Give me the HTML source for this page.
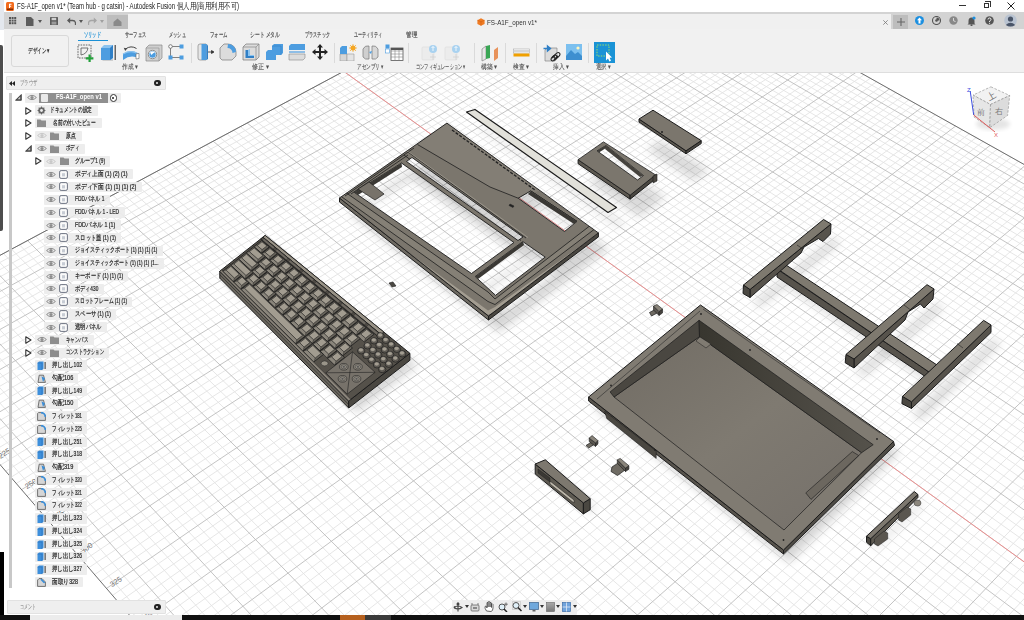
<!DOCTYPE html><html><head><meta charset="utf-8"><style>
*{margin:0;padding:0;box-sizing:border-box}
html,body{width:1024px;height:620px;overflow:hidden;background:#fff;font-family:"Liberation Sans",sans-serif;position:relative}
.a{position:absolute}
.t{position:absolute;white-space:nowrap;line-height:1}
</style></head><body><svg class="a" style="left:0;top:0" width="1024" height="620" viewBox="0 0 1024 620"><rect width="1024" height="620" fill="#fff"/><g stroke="#e3e3e3" stroke-width="0.9"><line x1="611.7" y1="-66.7" x2="-118.9" y2="326.4"/><line x1="616.7" y1="-63.9" x2="-114.5" y2="331.5"/><line x1="621.7" y1="-61.0" x2="-110.1" y2="336.6"/><line x1="626.8" y1="-58.2" x2="-105.6" y2="341.8"/><line x1="636.9" y1="-52.5" x2="-96.6" y2="352.3"/><line x1="642.1" y1="-49.6" x2="-92.1" y2="357.6"/><line x1="647.2" y1="-46.7" x2="-87.5" y2="362.9"/><line x1="652.4" y1="-43.8" x2="-82.9" y2="368.2"/><line x1="662.9" y1="-38.0" x2="-73.6" y2="379.0"/><line x1="668.1" y1="-35.0" x2="-68.9" y2="384.5"/><line x1="673.4" y1="-32.1" x2="-64.2" y2="390.0"/><line x1="678.7" y1="-29.1" x2="-59.4" y2="395.6"/><line x1="689.4" y1="-23.1" x2="-49.8" y2="406.7"/><line x1="694.8" y1="-20.1" x2="-44.9" y2="412.4"/><line x1="700.2" y1="-17.0" x2="-40.0" y2="418.1"/><line x1="705.7" y1="-14.0" x2="-35.1" y2="423.8"/><line x1="716.7" y1="-7.8" x2="-25.1" y2="435.4"/><line x1="722.2" y1="-4.7" x2="-20.1" y2="441.3"/><line x1="727.8" y1="-1.6" x2="-15.0" y2="447.2"/><line x1="733.3" y1="1.5" x2="-9.9" y2="453.1"/><line x1="744.6" y1="7.8" x2="0.4" y2="465.1"/><line x1="750.3" y1="11.0" x2="5.7" y2="471.2"/><line x1="756.0" y1="14.2" x2="10.9" y2="477.3"/><line x1="761.7" y1="17.4" x2="16.2" y2="483.5"/><line x1="773.3" y1="23.9" x2="26.9" y2="495.9"/><line x1="779.1" y1="27.2" x2="32.3" y2="502.2"/><line x1="785.0" y1="30.5" x2="37.8" y2="508.5"/><line x1="790.9" y1="33.8" x2="43.3" y2="514.9"/><line x1="802.7" y1="40.4" x2="54.4" y2="527.8"/><line x1="808.7" y1="43.8" x2="60.0" y2="534.4"/><line x1="814.7" y1="47.1" x2="65.7" y2="540.9"/><line x1="820.8" y1="50.5" x2="71.4" y2="547.6"/><line x1="832.9" y1="57.4" x2="82.9" y2="561.0"/><line x1="839.1" y1="60.8" x2="88.7" y2="567.8"/><line x1="845.3" y1="64.3" x2="94.6" y2="574.6"/><line x1="851.5" y1="67.7" x2="100.5" y2="581.5"/><line x1="864.0" y1="74.8" x2="112.5" y2="595.4"/><line x1="870.3" y1="78.3" x2="118.5" y2="602.4"/><line x1="876.6" y1="81.8" x2="124.6" y2="609.5"/><line x1="883.0" y1="85.4" x2="130.8" y2="616.7"/><line x1="895.9" y1="92.6" x2="143.2" y2="631.2"/><line x1="902.4" y1="96.3" x2="149.5" y2="638.5"/><line x1="908.9" y1="99.9" x2="155.9" y2="645.9"/><line x1="915.4" y1="103.6" x2="162.3" y2="653.3"/><line x1="928.7" y1="111.0" x2="175.2" y2="668.4"/><line x1="935.3" y1="114.7" x2="181.8" y2="676.0"/><line x1="942.0" y1="118.5" x2="188.4" y2="683.7"/><line x1="948.8" y1="122.3" x2="195.1" y2="691.4"/><line x1="962.4" y1="129.9" x2="208.5" y2="707.1"/><line x1="969.2" y1="133.8" x2="215.4" y2="715.0"/><line x1="976.1" y1="137.6" x2="222.3" y2="723.0"/><line x1="983.1" y1="141.5" x2="229.2" y2="731.1"/><line x1="997.1" y1="149.3" x2="243.2" y2="747.5"/><line x1="1004.1" y1="153.3" x2="250.4" y2="755.7"/><line x1="1011.2" y1="157.3" x2="257.5" y2="764.1"/><line x1="1018.4" y1="161.3" x2="264.8" y2="772.5"/><line x1="1032.8" y1="169.4" x2="279.4" y2="789.5"/><line x1="1040.0" y1="173.4" x2="286.9" y2="798.2"/><line x1="1047.3" y1="177.5" x2="294.3" y2="806.9"/><line x1="1054.7" y1="181.6" x2="301.9" y2="815.6"/><line x1="1069.5" y1="190.0" x2="317.2" y2="833.4"/><line x1="1077.0" y1="194.2" x2="324.9" y2="842.5"/><line x1="1084.5" y1="198.4" x2="332.8" y2="851.5"/><line x1="1092.1" y1="202.6" x2="340.7" y2="860.7"/><line x1="1107.4" y1="211.2" x2="356.6" y2="879.3"/><line x1="1115.1" y1="215.5" x2="364.7" y2="888.7"/><line x1="1122.8" y1="219.8" x2="372.9" y2="898.2"/><line x1="1130.7" y1="224.2" x2="381.2" y2="907.8"/><line x1="1146.4" y1="233.0" x2="397.9" y2="927.3"/><line x1="1154.3" y1="237.5" x2="406.4" y2="937.1"/><line x1="1162.3" y1="242.0" x2="414.9" y2="947.1"/><line x1="1170.4" y1="246.5" x2="423.5" y2="957.1"/><line x1="1186.6" y1="255.6" x2="441.1" y2="977.5"/><line x1="1194.8" y1="260.2" x2="449.9" y2="987.8"/><line x1="1203.1" y1="264.8" x2="458.9" y2="998.2"/><line x1="1211.4" y1="269.5" x2="467.9" y2="1008.7"/><line x1="1228.1" y1="278.8" x2="486.3" y2="1030.1"/><line x1="1236.6" y1="283.6" x2="495.6" y2="1040.9"/><line x1="1245.1" y1="288.4" x2="505.0" y2="1051.8"/><line x1="1253.6" y1="293.2" x2="514.5" y2="1062.9"/><line x1="1270.9" y1="302.8" x2="533.7" y2="1085.2"/><line x1="1279.6" y1="307.7" x2="543.5" y2="1096.6"/><line x1="1288.4" y1="312.7" x2="553.4" y2="1108.1"/><line x1="1297.3" y1="317.6" x2="563.3" y2="1119.7"/><line x1="1315.1" y1="327.6" x2="583.6" y2="1143.2"/><line x1="1324.1" y1="332.7" x2="593.8" y2="1155.1"/><line x1="1333.2" y1="337.8" x2="604.2" y2="1167.2"/><line x1="1342.3" y1="342.9" x2="614.7" y2="1179.4"/><line x1="1360.8" y1="353.2" x2="636.0" y2="1204.1"/><line x1="1370.1" y1="358.4" x2="646.8" y2="1216.7"/><line x1="1379.5" y1="363.7" x2="657.7" y2="1229.4"/><line x1="1388.9" y1="369.0" x2="668.7" y2="1242.2"/><line x1="1408.0" y1="379.7" x2="691.2" y2="1268.3"/><line x1="1417.6" y1="385.1" x2="702.5" y2="1281.5"/><line x1="1427.3" y1="390.5" x2="714.0" y2="1294.9"/><line x1="1437.1" y1="396.0" x2="725.7" y2="1308.4"/><line x1="1456.8" y1="407.0" x2="749.3" y2="1335.9"/><line x1="1466.7" y1="412.6" x2="761.3" y2="1349.9"/><line x1="1476.8" y1="418.2" x2="773.5" y2="1364.0"/><line x1="1486.9" y1="423.9" x2="785.8" y2="1378.3"/><line x1="1507.3" y1="435.3" x2="810.7" y2="1407.3"/><line x1="1517.6" y1="441.1" x2="823.4" y2="1422.1"/><line x1="1528.0" y1="446.9" x2="836.3" y2="1437.0"/><line x1="1538.4" y1="452.8" x2="849.3" y2="1452.1"/><line x1="1559.6" y1="464.6" x2="875.7" y2="1482.8"/><line x1="1570.3" y1="470.6" x2="889.1" y2="1498.5"/><line x1="1581.0" y1="476.6" x2="902.7" y2="1514.3"/><line x1="1591.8" y1="482.7" x2="916.5" y2="1530.3"/><line x1="1613.7" y1="495.0" x2="944.5" y2="1562.8"/><line x1="1624.8" y1="501.2" x2="958.7" y2="1579.4"/><line x1="1636.0" y1="507.4" x2="973.1" y2="1596.1"/><line x1="1647.2" y1="513.7" x2="987.7" y2="1613.1"/><line x1="1669.9" y1="526.5" x2="1017.4" y2="1647.7"/><line x1="1681.4" y1="532.9" x2="1032.5" y2="1665.3"/><line x1="1692.9" y1="539.4" x2="1047.9" y2="1683.1"/><line x1="1704.6" y1="545.9" x2="1063.4" y2="1701.1"/><line x1="1728.1" y1="559.1" x2="1095.0" y2="1737.8"/><line x1="1740.1" y1="565.8" x2="1111.1" y2="1756.6"/><line x1="1752.1" y1="572.5" x2="1127.4" y2="1775.5"/><line x1="1764.1" y1="579.3" x2="1143.9" y2="1794.7"/><line x1="1788.6" y1="593.0" x2="1177.6" y2="1833.9"/><line x1="1801.0" y1="599.9" x2="1194.7" y2="1853.8"/><line x1="1813.4" y1="606.9" x2="1212.1" y2="1874.0"/><line x1="1826.0" y1="614.0" x2="1229.7" y2="1894.5"/><line x1="606.7" y1="-69.5" x2="1838.7" y2="621.1"/><line x1="601.8" y1="-66.9" x2="1835.6" y2="627.9"/><line x1="596.9" y1="-64.2" x2="1832.4" y2="634.7"/><line x1="587.1" y1="-59.0" x2="1826.1" y2="648.6"/><line x1="582.1" y1="-56.3" x2="1822.9" y2="655.6"/><line x1="577.1" y1="-53.6" x2="1819.7" y2="662.6"/><line x1="572.1" y1="-51.0" x2="1816.4" y2="669.7"/><line x1="562.0" y1="-45.6" x2="1809.8" y2="684.2"/><line x1="557.0" y1="-42.8" x2="1806.5" y2="691.4"/><line x1="551.8" y1="-40.1" x2="1803.2" y2="698.8"/><line x1="546.7" y1="-37.4" x2="1799.8" y2="706.2"/><line x1="536.4" y1="-31.8" x2="1792.9" y2="721.2"/><line x1="531.2" y1="-29.0" x2="1789.5" y2="728.7"/><line x1="525.9" y1="-26.2" x2="1786.0" y2="736.4"/><line x1="520.7" y1="-23.4" x2="1782.5" y2="744.1"/><line x1="510.1" y1="-17.8" x2="1775.3" y2="759.7"/><line x1="504.8" y1="-14.9" x2="1771.7" y2="767.6"/><line x1="499.4" y1="-12.0" x2="1768.1" y2="775.5"/><line x1="494.0" y1="-9.1" x2="1764.4" y2="783.6"/><line x1="483.1" y1="-3.3" x2="1757.0" y2="799.8"/><line x1="477.7" y1="-0.4" x2="1753.3" y2="808.1"/><line x1="472.2" y1="2.5" x2="1749.5" y2="816.4"/><line x1="466.6" y1="5.5" x2="1745.6" y2="824.7"/><line x1="455.5" y1="11.5" x2="1737.9" y2="841.7"/><line x1="449.9" y1="14.5" x2="1734.0" y2="850.3"/><line x1="444.2" y1="17.5" x2="1730.0" y2="858.9"/><line x1="438.6" y1="20.5" x2="1726.0" y2="867.6"/><line x1="427.2" y1="26.6" x2="1718.0" y2="885.3"/><line x1="421.4" y1="29.7" x2="1713.9" y2="894.3"/><line x1="415.6" y1="32.8" x2="1709.7" y2="903.3"/><line x1="409.8" y1="35.9" x2="1705.6" y2="912.5"/><line x1="398.1" y1="42.2" x2="1697.1" y2="930.9"/><line x1="392.2" y1="45.4" x2="1692.9" y2="940.3"/><line x1="386.2" y1="48.6" x2="1688.5" y2="949.7"/><line x1="380.2" y1="51.8" x2="1684.2" y2="959.3"/><line x1="368.2" y1="58.2" x2="1675.4" y2="978.6"/><line x1="362.1" y1="61.5" x2="1670.9" y2="988.4"/><line x1="356.0" y1="64.7" x2="1666.4" y2="998.3"/><line x1="349.9" y1="68.0" x2="1661.8" y2="1008.3"/><line x1="337.5" y1="74.6" x2="1652.6" y2="1028.5"/><line x1="331.3" y1="78.0" x2="1647.9" y2="1038.8"/><line x1="325.0" y1="81.3" x2="1643.2" y2="1049.1"/><line x1="318.7" y1="84.7" x2="1638.4" y2="1059.6"/><line x1="306.0" y1="91.5" x2="1628.7" y2="1080.8"/><line x1="299.6" y1="94.9" x2="1623.8" y2="1091.5"/><line x1="293.2" y1="98.4" x2="1618.8" y2="1102.4"/><line x1="286.7" y1="101.8" x2="1613.8" y2="1113.4"/><line x1="273.7" y1="108.8" x2="1603.7" y2="1135.6"/><line x1="267.1" y1="112.3" x2="1598.5" y2="1146.9"/><line x1="260.5" y1="115.9" x2="1593.3" y2="1158.3"/><line x1="253.8" y1="119.4" x2="1588.0" y2="1169.8"/><line x1="240.4" y1="126.6" x2="1577.4" y2="1193.2"/><line x1="233.7" y1="130.2" x2="1572.0" y2="1205.0"/><line x1="226.9" y1="133.9" x2="1566.5" y2="1217.0"/><line x1="220.0" y1="137.5" x2="1561.0" y2="1229.1"/><line x1="206.2" y1="144.9" x2="1549.7" y2="1253.7"/><line x1="199.3" y1="148.7" x2="1544.0" y2="1266.2"/><line x1="192.3" y1="152.4" x2="1538.3" y2="1278.8"/><line x1="185.2" y1="156.2" x2="1532.5" y2="1291.5"/><line x1="171.0" y1="163.8" x2="1520.6" y2="1317.4"/><line x1="163.9" y1="167.6" x2="1514.6" y2="1330.5"/><line x1="156.7" y1="171.5" x2="1508.6" y2="1343.8"/><line x1="149.4" y1="175.3" x2="1502.4" y2="1357.3"/><line x1="134.8" y1="183.2" x2="1490.0" y2="1384.5"/><line x1="127.4" y1="187.1" x2="1483.6" y2="1398.4"/><line x1="120.0" y1="191.1" x2="1477.2" y2="1412.4"/><line x1="112.6" y1="195.1" x2="1470.8" y2="1426.6"/><line x1="97.5" y1="203.1" x2="1457.6" y2="1455.4"/><line x1="89.9" y1="207.2" x2="1450.9" y2="1470.1"/><line x1="82.3" y1="211.3" x2="1444.1" y2="1484.9"/><line x1="74.6" y1="215.4" x2="1437.3" y2="1499.9"/><line x1="59.1" y1="223.7" x2="1423.4" y2="1530.4"/><line x1="51.3" y1="227.9" x2="1416.3" y2="1545.9"/><line x1="43.4" y1="232.1" x2="1409.1" y2="1561.6"/><line x1="35.5" y1="236.3" x2="1401.9" y2="1577.4"/><line x1="19.5" y1="244.9" x2="1387.1" y2="1609.7"/><line x1="11.5" y1="249.2" x2="1379.6" y2="1626.1"/><line x1="3.3" y1="253.5" x2="1372.0" y2="1642.8"/><line x1="-4.8" y1="257.9" x2="1364.4" y2="1659.6"/><line x1="-21.3" y1="266.7" x2="1348.7" y2="1693.9"/><line x1="-29.6" y1="271.2" x2="1340.7" y2="1711.3"/><line x1="-38.0" y1="275.6" x2="1332.7" y2="1729.0"/><line x1="-46.4" y1="280.2" x2="1324.5" y2="1746.9"/><line x1="-63.4" y1="289.3" x2="1307.9" y2="1783.3"/><line x1="-72.0" y1="293.8" x2="1299.4" y2="1801.9"/><line x1="-80.6" y1="298.5" x2="1290.8" y2="1820.7"/><line x1="-89.3" y1="303.1" x2="1282.1" y2="1839.7"/><line x1="-106.8" y1="312.5" x2="1264.4" y2="1878.5"/><line x1="-115.7" y1="317.2" x2="1255.4" y2="1898.3"/></g><g stroke="#bcbcbc" stroke-width="0.9"><line x1="606.7" y1="-69.5" x2="-123.2" y2="321.3"/><line x1="631.8" y1="-55.4" x2="-101.1" y2="347.0"/><line x1="657.6" y1="-40.9" x2="-78.3" y2="373.6"/><line x1="684.1" y1="-26.1" x2="-54.6" y2="401.1"/><line x1="711.2" y1="-10.9" x2="-30.1" y2="429.6"/><line x1="739.0" y1="4.7" x2="-4.7" y2="459.1"/><line x1="767.5" y1="20.7" x2="21.5" y2="489.7"/><line x1="796.8" y1="37.1" x2="48.8" y2="521.4"/><line x1="826.8" y1="53.9" x2="77.1" y2="554.3"/><line x1="857.7" y1="71.2" x2="106.5" y2="588.4"/><line x1="889.4" y1="89.0" x2="137.0" y2="623.9"/><line x1="922.0" y1="107.3" x2="168.7" y2="660.8"/><line x1="955.6" y1="126.1" x2="201.8" y2="699.2"/><line x1="990.1" y1="145.4" x2="236.2" y2="739.3"/><line x1="1025.5" y1="165.3" x2="272.1" y2="781.0"/><line x1="1062.1" y1="185.8" x2="309.5" y2="824.5"/><line x1="1099.7" y1="206.9" x2="348.6" y2="870.0"/><line x1="1138.5" y1="228.6" x2="389.5" y2="917.5"/><line x1="1178.5" y1="251.0" x2="432.3" y2="967.2"/><line x1="1219.7" y1="274.1" x2="477.1" y2="1019.4"/><line x1="1262.2" y1="298.0" x2="524.1" y2="1074.0"/><line x1="1306.2" y1="322.6" x2="573.4" y2="1131.4"/><line x1="1351.5" y1="348.0" x2="625.3" y2="1191.7"/><line x1="1398.4" y1="374.3" x2="679.9" y2="1255.2"/><line x1="1446.9" y1="401.5" x2="737.4" y2="1322.1"/><line x1="1497.0" y1="429.6" x2="798.2" y2="1392.7"/><line x1="1549.0" y1="458.7" x2="862.4" y2="1467.4"/><line x1="1602.8" y1="488.8" x2="930.4" y2="1546.4"/><line x1="1658.5" y1="520.1" x2="1002.5" y2="1630.3"/><line x1="1716.3" y1="552.5" x2="1079.1" y2="1719.4"/><line x1="1776.3" y1="586.1" x2="1160.6" y2="1814.2"/><line x1="1838.7" y1="621.1" x2="1247.6" y2="1915.3"/><line x1="592.0" y1="-61.6" x2="1829.3" y2="641.6"/><line x1="567.1" y1="-48.3" x2="1813.1" y2="676.9"/><line x1="541.6" y1="-34.6" x2="1796.4" y2="713.6"/><line x1="515.4" y1="-20.6" x2="1778.9" y2="751.9"/><line x1="488.6" y1="-6.2" x2="1760.7" y2="791.7"/><line x1="461.1" y1="8.5" x2="1741.8" y2="833.2"/><line x1="432.9" y1="23.6" x2="1722.0" y2="876.4"/><line x1="403.9" y1="39.1" x2="1701.4" y2="921.7"/><line x1="374.2" y1="55.0" x2="1679.8" y2="968.9"/><line x1="343.7" y1="71.3" x2="1657.2" y2="1018.3"/><line x1="312.4" y1="88.1" x2="1633.6" y2="1070.1"/><line x1="280.2" y1="105.3" x2="1608.8" y2="1124.4"/><line x1="247.1" y1="123.0" x2="1582.7" y2="1181.4"/><line x1="213.1" y1="141.2" x2="1555.4" y2="1241.3"/><line x1="178.1" y1="160.0" x2="1526.6" y2="1304.4"/><line x1="142.1" y1="179.2" x2="1496.2" y2="1370.8"/><line x1="105.1" y1="199.1" x2="1464.2" y2="1440.9"/><line x1="66.9" y1="219.5" x2="1430.4" y2="1515.0"/><line x1="27.5" y1="240.6" x2="1394.6" y2="1593.5"/><line x1="-13.0" y1="262.3" x2="1356.6" y2="1676.6"/><line x1="-54.9" y1="284.7" x2="1316.2" y2="1765.0"/><line x1="-98.0" y1="307.8" x2="1273.3" y2="1859.0"/></g><g stroke="#6e6e6e" stroke-width="1"><line x1="606.7" y1="-69.5" x2="-123.2" y2="321.3"/><line x1="606.7" y1="-69.5" x2="1838.7" y2="621.1"/><line x1="-123.2" y1="321.3" x2="1247.6" y2="1915.3"/></g><g stroke="#f08a8a" stroke-width="0.9"><line x1="343.7" y1="71.3" x2="1657.2" y2="1018.3"/></g><text x="-20.9" y="424.1" font-size="7.5" fill="#707070" font-family="Liberation Sans" text-anchor="middle" dominant-baseline="central" transform="rotate(-33 -20.9 424.1)">200</text><text x="4.5" y="453.4" font-size="7.5" fill="#707070" font-family="Liberation Sans" text-anchor="middle" dominant-baseline="central" transform="rotate(-33 4.5 453.4)">225</text><text x="30.9" y="483.8" font-size="7.5" fill="#707070" font-family="Liberation Sans" text-anchor="middle" dominant-baseline="central" transform="rotate(-33 30.9 483.8)">250</text><text x="58.2" y="515.3" font-size="7.5" fill="#707070" font-family="Liberation Sans" text-anchor="middle" dominant-baseline="central" transform="rotate(-33 58.2 515.3)">275</text><text x="86.6" y="547.9" font-size="7.5" fill="#707070" font-family="Liberation Sans" text-anchor="middle" dominant-baseline="central" transform="rotate(-33 86.6 547.9)">300</text><text x="116.0" y="581.8" font-size="7.5" fill="#707070" font-family="Liberation Sans" text-anchor="middle" dominant-baseline="central" transform="rotate(-33 116.0 581.8)">325</text><text x="146.6" y="617.0" font-size="7.5" fill="#707070" font-family="Liberation Sans" text-anchor="middle" dominant-baseline="central" transform="rotate(-33 146.6 617.0)">350</text><defs><filter id="bl" x="-50%" y="-50%" width="200%" height="200%"><feGaussianBlur stdDeviation="5"/></filter><filter id="bl2" x="-50%" y="-50%" width="200%" height="200%"><feGaussianBlur stdDeviation="3"/></filter></defs><path d="M339.7 197.3 L446.9 123.1 L598.4 232.9 L489.0 316.1Z M354.5 192.5 L401.3 162.3 L515.0 243.5 L471.5 273.5Z M475.2 276.5 L522.9 241.6 L545.2 257.1 L495.5 295.3Z M518.2 198.2 L530.7 190.9 L577.0 221.4 L564.5 231.5Z " fill="#000" fill-rule="evenodd" opacity="0.16" filter="url(#bl)" transform="translate(10.0 16.0)"/><path d="M467.6 111.4 L474.0 110.2 L615.4 207.9 L608.6 211.7Z " fill="#000" fill-rule="nonzero" opacity="0.10" filter="url(#bl)" transform="translate(10.0 16.0)"/><path d="M578.1 159.7 L603.5 141.9 L655.5 174.9 L630.1 195.2Z " fill="#000" fill-rule="nonzero" opacity="0.14" filter="url(#bl)" transform="translate(10.0 22.0)"/><path d="M639.0 119.0 L653.0 110.2 L701.2 140.6 L686.0 150.8Z " fill="#000" fill-rule="nonzero" opacity="0.14" filter="url(#bl)" transform="translate(8.0 30.0)"/><path d="M265.2 235.4 L409.9 353.3 L348.7 401.0 L219.8 271.2Z " fill="#000" fill-rule="nonzero" opacity="0.15" filter="url(#bl)" transform="translate(8.0 12.0)"/><path d="M823.5 220.1 L830.0 224.4 L749.5 289.0 L744.0 284.6Z " fill="#000" fill-rule="nonzero" opacity="0.16" filter="url(#bl)" transform="translate(10.0 18.0)"/><path d="M777.0 269.0 L785.0 266.0 L933.3 364.0 L926.0 369.0Z " fill="#000" fill-rule="nonzero" opacity="0.16" filter="url(#bl)" transform="translate(8.0 16.0)"/><path d="M927.0 285.2 L933.3 289.4 L853.6 358.6 L846.3 354.4Z " fill="#000" fill-rule="nonzero" opacity="0.16" filter="url(#bl)" transform="translate(10.0 18.0)"/><path d="M983.6 320.9 L990.6 325.1 L911.3 401.6 L902.9 396.4Z " fill="#000" fill-rule="nonzero" opacity="0.16" filter="url(#bl)" transform="translate(10.0 18.0)"/><path d="M700.5 307.7 L893.5 442.0 L783.5 552.5 L588.6 398.2Z " fill="#000" fill-rule="nonzero" opacity="0.16" filter="url(#bl)" transform="translate(6.0 10.0)"/><path d="M545.3 459.8 L590.2 498.7 L583.4 502.9 L535.2 464.0Z " fill="#000" fill-rule="nonzero" opacity="0.12" filter="url(#bl)" transform="translate(6.0 10.0)"/><path d="M914.3 491.5 L917.9 494.5 L870.7 538.7 L866.5 536.3Z " fill="#000" fill-rule="nonzero" opacity="0.12" filter="url(#bl)" transform="translate(6.0 10.0)"/><polygon points="466.5,112.0 475.0,109.5 616.5,207.5 608.0,212.5" fill="#e2e1da" stroke="#1c1c1c" stroke-width="1.20" stroke-linejoin="round" /><polygon points="639.0,119.0 686.0,150.8 686.0,153.8 639.0,122.0" fill="#5d5951" stroke="#1c1c1c" stroke-width="1.00" stroke-linejoin="round" /><polygon points="686.0,150.8 701.2,140.6 701.2,143.6 686.0,153.8" fill="#4a4741" stroke="#1c1c1c" stroke-width="1.00" stroke-linejoin="round" /><polygon points="639.0,119.0 653.0,110.2 701.2,140.6 686.0,150.8" fill="#7b766d" stroke="#1c1c1c" stroke-width="1.00" stroke-linejoin="round" /><circle cx="662" cy="132" r="1" fill="#222"/><polygon points="578.1,159.7 630.1,195.2 630.1,199.2 578.1,163.7" fill="#5d5951" stroke="#1c1c1c" stroke-width="1.00" stroke-linejoin="round" /><polygon points="630.1,195.2 655.5,174.9 655.5,178.9 630.1,199.2" fill="#4a4741" stroke="#1c1c1c" stroke-width="1.00" stroke-linejoin="round" /><path d="M578.1 159.7 L603.5 141.9 L655.5 174.9 L630.1 195.2Z M597.0 150.8 L606.0 145.5 L643.5 175.5 L637.5 180.0Z" fill="#7b766d" fill-rule="evenodd" stroke="#1c1c1c" stroke-width="0.8"/><polygon points="597.0,150.8 606.0,145.5 606.0,148.0 599.0,152.5" fill="#3e3c38" stroke="none" stroke-width="0.00" stroke-linejoin="round" /><polygon points="606.0,145.5 643.5,175.5 640.0,177.0 605.0,149.0" fill="#45423d" stroke="none" stroke-width="0.00" stroke-linejoin="round" /><polygon points="653.0,176.0 657.0,174.0 657.0,181.0 653.0,183.0" fill="#4a4741" stroke="#1c1c1c" stroke-width="0.60" stroke-linejoin="round" /><polygon points="339.5,198.0 488.5,316.0 488.5,320.0 339.5,202.0" fill="#6e6a62" stroke="#1c1c1c" stroke-width="1.00" stroke-linejoin="round" /><polygon points="488.5,316.0 598.4,232.9 598.4,236.9 488.5,320.0" fill="#4a4741" stroke="#1c1c1c" stroke-width="1.00" stroke-linejoin="round" /><defs><clipPath id="tcc"><path d="M339.5 198.0 L446.9 123.1 L598.4 232.9 L488.5 316.0Z M354.5 192.5 L401.5 163.0 L514.0 242.5 L471.5 273.5Z M406.5 161.5 L412.0 157.5 L523.0 237.0 L518.0 240.5Z M475.2 276.5 L522.9 241.6 L545.2 257.1 L495.5 295.3Z M518.2 198.2 L530.7 190.9 L577.0 221.4 L564.5 231.5Z" fill-rule="evenodd" clip-rule="evenodd"/></clipPath></defs><path d="M339.5 198.0 L446.9 123.1 L598.4 232.9 L488.5 316.0Z M354.5 192.5 L401.5 163.0 L514.0 242.5 L471.5 273.5Z M406.5 161.5 L412.0 157.5 L523.0 237.0 L518.0 240.5Z M475.2 276.5 L522.9 241.6 L545.2 257.1 L495.5 295.3Z M518.2 198.2 L530.7 190.9 L577.0 221.4 L564.5 231.5Z" fill="#7b766d" fill-rule="evenodd"/><g clip-path="url(#tcc)"><polygon points="335.0,203.5 488.0,315.0 495.0,311.5 600.0,236.0 600.0,232.0 495.0,307.0 488.0,310.5 335.0,199.0" fill="#a39d91" stroke="none" stroke-width="0.00" stroke-linejoin="round" /><polygon points="335.0,192.0 488.0,301.5 495.0,304.5 600.0,225.0 600.0,218.0 495.0,299.0 488.0,292.0 335.0,185.0" fill="#858076" stroke="none" stroke-width="0.00" stroke-linejoin="round" /><polygon points="417.5,144.5 446.9,123.1 520.0,176.0 540.0,190.5 518.2,198.2 490.0,187.0" fill="#837e75" stroke="none" stroke-width="0.00" stroke-linejoin="round" /></g><path d="M339.5 198.0 L446.9 123.1 L598.4 232.9 L488.5 316.0Z M354.5 192.5 L401.5 163.0 L514.0 242.5 L471.5 273.5Z M406.5 161.5 L412.0 157.5 L523.0 237.0 L518.0 240.5Z M475.2 276.5 L522.9 241.6 L545.2 257.1 L495.5 295.3Z M518.2 198.2 L530.7 190.9 L577.0 221.4 L564.5 231.5Z" fill="none" stroke="#1c1c1c" stroke-width="0.9" stroke-linejoin="round"/><g stroke="#1e1e1e" stroke-width="0.8" fill="none" clip-path="url(#tcc)"><polyline points="335.0,192.0 488.0,301.5 495.0,304.5 600.0,225.0"/><polyline points="335.0,185.0 488.0,292.0 495.0,299.0 600.0,218.0"/><polyline points="345.0,196.0 414.0,148.0"/><polyline points="351.0,194.0 408.0,155.0"/><polyline points="417.5,144.5 490.0,187.0 518.2,198.2"/><polyline points="408.0,152.0 526.0,238.0"/><polyline points="404.0,155.0 521.0,240.5"/><polyline points="530.7,190.9 577.0,221.4"/></g><g stroke="#b4aea2" stroke-width="0.7" fill="none" opacity="0.8" clip-path="url(#tcc)"><polyline points="406.0,150.0 528.0,237.5"/></g><polygon points="354.5,192.5 401.5,163.0 402.0,167.0 358.0,195.0" fill="#3a3834" stroke="none" stroke-width="0.00" stroke-linejoin="round" /><polygon points="530.7,190.9 577.0,221.4 574.0,224.0 528.0,194.0" fill="#3a3834" stroke="none" stroke-width="0.00" stroke-linejoin="round" /><polygon points="475.2,276.5 522.9,241.6 524.0,245.0 478.0,279.0" fill="#3a3834" stroke="none" stroke-width="0.00" stroke-linejoin="round" /><polyline points="452.0,130.0 535.0,190.0" fill="none" stroke="#222" stroke-width="1.3" stroke-dasharray="3 1.5"/><polygon points="358.0,189.0 369.0,182.0 384.0,194.0 375.0,200.0" fill="#77726a" stroke="#1c1c1c" stroke-width="0.70" stroke-linejoin="round" /><polygon points="510.0,204.0 514.0,206.0 513.0,207.5 509.0,205.5" fill="#222" stroke="#222" stroke-width="0.50" stroke-linejoin="round" /><polygon points="219.8,271.2 348.7,401.0 348.7,408.0 219.8,278.2" fill="#6a665e" stroke="#1c1c1c" stroke-width="1.00" stroke-linejoin="round" /><line x1="219.8" y1="274.7" x2="348.7" y2="404.5" stroke="#222" stroke-width="0.6"/><polygon points="348.7,401.0 409.9,353.3 409.9,360.3 348.7,408.0" fill="#4a4741" stroke="#1c1c1c" stroke-width="1.00" stroke-linejoin="round" /><polygon points="265.2,235.4 409.9,353.3 348.7,401.0 219.8,271.2" fill="#55514a" stroke="#1c1c1c" stroke-width="1.00" stroke-linejoin="round" /><polygon points="221.4,269.9 350.8,399.3 348.7,401.0 219.8,271.2" fill="#8a847a" stroke="#1c1c1c" stroke-width="0.50" stroke-linejoin="round" /><polygon points="265.2,235.4 383.9,332.1 380.9,334.4 262.9,237.2" fill="#9a9488" stroke="#1c1c1c" stroke-width="0.80" stroke-linejoin="round" /><polygon points="262.9,237.2 380.9,334.4 378.0,336.6 260.7,239.0" fill="#4f4b45" stroke="#1c1c1c" stroke-width="0.80" stroke-linejoin="round" /><polygon points="264.1,238.6 274.9,247.4 273.1,248.9 262.3,240.0" fill="#6f6a62" stroke="#1c1c1c" stroke-width="0.35" stroke-linejoin="round" /><polygon points="277.2,249.3 288.0,258.2 286.1,259.7 275.3,250.8" fill="#6f6a62" stroke="#1c1c1c" stroke-width="0.35" stroke-linejoin="round" /><polygon points="290.3,260.1 301.1,269.0 299.1,270.6 288.4,261.6" fill="#6f6a62" stroke="#1c1c1c" stroke-width="0.35" stroke-linejoin="round" /><polygon points="303.4,270.9 314.2,279.8 312.1,281.4 301.4,272.5" fill="#6f6a62" stroke="#1c1c1c" stroke-width="0.35" stroke-linejoin="round" /><polygon points="316.4,281.7 327.2,290.6 325.1,292.2 314.4,283.3" fill="#6f6a62" stroke="#1c1c1c" stroke-width="0.35" stroke-linejoin="round" /><polygon points="329.5,292.4 340.3,301.3 338.1,303.0 327.4,294.1" fill="#6f6a62" stroke="#1c1c1c" stroke-width="0.35" stroke-linejoin="round" /><polygon points="342.6,303.2 353.4,312.1 351.2,313.8 340.4,304.9" fill="#6f6a62" stroke="#1c1c1c" stroke-width="0.35" stroke-linejoin="round" /><polygon points="355.7,314.0 366.5,322.9 364.2,324.7 353.4,315.7" fill="#6f6a62" stroke="#1c1c1c" stroke-width="0.35" stroke-linejoin="round" /><polygon points="368.7,324.8 379.5,333.7 377.2,335.5 366.5,326.6" fill="#6f6a62" stroke="#1c1c1c" stroke-width="0.35" stroke-linejoin="round" /><polygon points="261.6,240.5 269.3,246.9 261.4,253.1 253.9,246.6" fill="#66625a" stroke="#1c1c1c" stroke-width="0.80" stroke-linejoin="round" /><polygon points="262.0,241.8 266.9,245.9 262.0,249.7 257.2,245.6" fill="#a29c90" stroke="#1c1c1c" stroke-width="0.55" stroke-linejoin="round" /><polygon points="257.2,245.6 262.0,249.7 261.4,253.1 253.9,246.6" fill="#8a857b" stroke="#1c1c1c" stroke-width="0.40" stroke-linejoin="round" /><polygon points="269.7,247.3 277.3,253.6 269.3,260.0 261.8,253.5" fill="#66625a" stroke="#1c1c1c" stroke-width="0.80" stroke-linejoin="round" /><polygon points="270.0,248.6 274.9,252.6 270.0,256.6 265.1,252.4" fill="#a29c90" stroke="#1c1c1c" stroke-width="0.55" stroke-linejoin="round" /><polygon points="265.1,252.4 270.0,256.6 269.3,260.0 261.8,253.5" fill="#8a857b" stroke="#1c1c1c" stroke-width="0.40" stroke-linejoin="round" /><polygon points="277.8,254.0 285.4,260.4 277.2,266.8 269.7,260.3" fill="#66625a" stroke="#1c1c1c" stroke-width="0.80" stroke-linejoin="round" /><polygon points="278.1,255.3 283.0,259.4 277.9,263.4 273.1,259.2" fill="#a29c90" stroke="#1c1c1c" stroke-width="0.55" stroke-linejoin="round" /><polygon points="273.1,259.2 277.9,263.4 277.2,266.8 269.7,260.3" fill="#8a857b" stroke="#1c1c1c" stroke-width="0.40" stroke-linejoin="round" /><polygon points="285.8,260.7 293.5,267.1 285.1,273.6 277.6,267.2" fill="#66625a" stroke="#1c1c1c" stroke-width="0.80" stroke-linejoin="round" /><polygon points="286.1,262.0 291.0,266.1 285.9,270.2 281.1,266.0" fill="#a29c90" stroke="#1c1c1c" stroke-width="0.55" stroke-linejoin="round" /><polygon points="281.1,266.0 285.9,270.2 285.1,273.6 277.6,267.2" fill="#8a857b" stroke="#1c1c1c" stroke-width="0.40" stroke-linejoin="round" /><polygon points="293.9,267.4 301.5,273.8 293.0,280.5 285.6,274.0" fill="#66625a" stroke="#1c1c1c" stroke-width="0.80" stroke-linejoin="round" /><polygon points="294.2,268.8 299.1,272.9 293.8,277.0 289.0,272.8" fill="#a29c90" stroke="#1c1c1c" stroke-width="0.55" stroke-linejoin="round" /><polygon points="289.0,272.8 293.8,277.0 293.0,280.5 285.6,274.0" fill="#8a857b" stroke="#1c1c1c" stroke-width="0.40" stroke-linejoin="round" /><polygon points="302.0,274.2 309.6,280.5 301.0,287.3 293.5,280.8" fill="#66625a" stroke="#1c1c1c" stroke-width="0.80" stroke-linejoin="round" /><polygon points="302.3,275.5 307.1,279.6 301.8,283.8 297.0,279.7" fill="#a29c90" stroke="#1c1c1c" stroke-width="0.55" stroke-linejoin="round" /><polygon points="297.0,279.7 301.8,283.8 301.0,287.3 293.5,280.8" fill="#8a857b" stroke="#1c1c1c" stroke-width="0.40" stroke-linejoin="round" /><polygon points="310.0,280.9 317.7,287.3 308.9,294.2 301.4,287.7" fill="#66625a" stroke="#1c1c1c" stroke-width="0.80" stroke-linejoin="round" /><polygon points="310.3,282.2 315.2,286.3 309.8,290.6 304.9,286.5" fill="#a29c90" stroke="#1c1c1c" stroke-width="0.55" stroke-linejoin="round" /><polygon points="304.9,286.5 309.8,290.6 308.9,294.2 301.4,287.7" fill="#8a857b" stroke="#1c1c1c" stroke-width="0.40" stroke-linejoin="round" /><polygon points="318.1,287.6 325.7,294.0 316.8,301.0 309.3,294.5" fill="#66625a" stroke="#1c1c1c" stroke-width="0.80" stroke-linejoin="round" /><polygon points="318.4,289.0 323.3,293.1 317.7,297.4 312.9,293.3" fill="#a29c90" stroke="#1c1c1c" stroke-width="0.55" stroke-linejoin="round" /><polygon points="312.9,293.3 317.7,297.4 316.8,301.0 309.3,294.5" fill="#8a857b" stroke="#1c1c1c" stroke-width="0.40" stroke-linejoin="round" /><polygon points="326.2,294.3 333.8,300.7 324.7,307.8 317.2,301.4" fill="#66625a" stroke="#1c1c1c" stroke-width="0.80" stroke-linejoin="round" /><polygon points="326.4,295.7 331.3,299.8 325.7,304.2 320.9,300.1" fill="#a29c90" stroke="#1c1c1c" stroke-width="0.55" stroke-linejoin="round" /><polygon points="320.9,300.1 325.7,304.2 324.7,307.8 317.2,301.4" fill="#8a857b" stroke="#1c1c1c" stroke-width="0.40" stroke-linejoin="round" /><polygon points="334.2,301.1 341.9,307.4 332.6,314.7 325.1,308.2" fill="#66625a" stroke="#1c1c1c" stroke-width="0.80" stroke-linejoin="round" /><polygon points="334.5,302.5 339.4,306.5 333.6,311.0 328.8,306.9" fill="#a29c90" stroke="#1c1c1c" stroke-width="0.55" stroke-linejoin="round" /><polygon points="328.8,306.9 333.6,311.0 332.6,314.7 325.1,308.2" fill="#8a857b" stroke="#1c1c1c" stroke-width="0.40" stroke-linejoin="round" /><polygon points="342.3,307.8 349.9,314.2 340.5,321.5 333.0,315.0" fill="#66625a" stroke="#1c1c1c" stroke-width="0.80" stroke-linejoin="round" /><polygon points="342.5,309.2 347.4,313.3 341.6,317.8 336.8,313.7" fill="#a29c90" stroke="#1c1c1c" stroke-width="0.55" stroke-linejoin="round" /><polygon points="336.8,313.7 341.6,317.8 340.5,321.5 333.0,315.0" fill="#8a857b" stroke="#1c1c1c" stroke-width="0.40" stroke-linejoin="round" /><polygon points="350.4,314.5 358.0,320.9 348.5,328.4 341.0,321.9" fill="#66625a" stroke="#1c1c1c" stroke-width="0.80" stroke-linejoin="round" /><polygon points="350.6,315.9 355.5,320.0 349.6,324.6 344.7,320.5" fill="#a29c90" stroke="#1c1c1c" stroke-width="0.55" stroke-linejoin="round" /><polygon points="344.7,320.5 349.6,324.6 348.5,328.4 341.0,321.9" fill="#8a857b" stroke="#1c1c1c" stroke-width="0.40" stroke-linejoin="round" /><polygon points="358.4,321.3 366.1,327.6 356.4,335.2 348.9,328.7" fill="#66625a" stroke="#1c1c1c" stroke-width="0.80" stroke-linejoin="round" /><polygon points="358.6,322.7 363.5,326.7 357.5,331.4 352.7,327.3" fill="#a29c90" stroke="#1c1c1c" stroke-width="0.55" stroke-linejoin="round" /><polygon points="352.7,327.3 357.5,331.4 356.4,335.2 348.9,328.7" fill="#8a857b" stroke="#1c1c1c" stroke-width="0.40" stroke-linejoin="round" /><polygon points="366.5,328.0 374.1,334.3 364.3,342.0 356.8,335.6" fill="#66625a" stroke="#1c1c1c" stroke-width="0.80" stroke-linejoin="round" /><polygon points="366.7,329.4 371.6,333.5 365.5,338.2 360.7,334.1" fill="#a29c90" stroke="#1c1c1c" stroke-width="0.55" stroke-linejoin="round" /><polygon points="360.7,334.1 365.5,338.2 364.3,342.0 356.8,335.6" fill="#8a857b" stroke="#1c1c1c" stroke-width="0.40" stroke-linejoin="round" /><polygon points="253.9,246.6 265.3,256.5 257.4,262.8 246.1,252.7" fill="#66625a" stroke="#1c1c1c" stroke-width="0.80" stroke-linejoin="round" /><polygon points="254.2,247.9 263.0,255.5 258.0,259.4 249.4,251.7" fill="#a29c90" stroke="#1c1c1c" stroke-width="0.55" stroke-linejoin="round" /><polygon points="249.4,251.7 258.0,259.4 257.4,262.8 246.1,252.7" fill="#8a857b" stroke="#1c1c1c" stroke-width="0.40" stroke-linejoin="round" /><polygon points="265.8,256.9 273.3,263.4 265.1,269.8 257.8,263.2" fill="#66625a" stroke="#1c1c1c" stroke-width="0.80" stroke-linejoin="round" /><polygon points="266.1,258.2 270.9,262.4 265.9,266.3 261.1,262.1" fill="#a29c90" stroke="#1c1c1c" stroke-width="0.55" stroke-linejoin="round" /><polygon points="261.1,262.1 265.9,266.3 265.1,269.8 257.8,263.2" fill="#8a857b" stroke="#1c1c1c" stroke-width="0.40" stroke-linejoin="round" /><polygon points="273.7,263.7 281.2,270.2 272.9,276.7 265.6,270.1" fill="#66625a" stroke="#1c1c1c" stroke-width="0.80" stroke-linejoin="round" /><polygon points="274.0,265.1 278.8,269.2 273.7,273.2 268.9,269.0" fill="#a29c90" stroke="#1c1c1c" stroke-width="0.55" stroke-linejoin="round" /><polygon points="268.9,269.0 273.7,273.2 272.9,276.7 265.6,270.1" fill="#8a857b" stroke="#1c1c1c" stroke-width="0.40" stroke-linejoin="round" /><polygon points="281.6,270.6 289.1,277.1 280.7,283.7 273.3,277.1" fill="#66625a" stroke="#1c1c1c" stroke-width="0.80" stroke-linejoin="round" /><polygon points="281.9,271.9 286.7,276.1 281.5,280.2 276.7,276.0" fill="#a29c90" stroke="#1c1c1c" stroke-width="0.55" stroke-linejoin="round" /><polygon points="276.7,276.0 281.5,280.2 280.7,283.7 273.3,277.1" fill="#8a857b" stroke="#1c1c1c" stroke-width="0.40" stroke-linejoin="round" /><polygon points="289.5,277.4 297.0,283.9 288.4,290.6 281.1,284.0" fill="#66625a" stroke="#1c1c1c" stroke-width="0.80" stroke-linejoin="round" /><polygon points="289.8,278.8 294.6,282.9 289.3,287.1 284.6,282.9" fill="#a29c90" stroke="#1c1c1c" stroke-width="0.55" stroke-linejoin="round" /><polygon points="284.6,282.9 289.3,287.1 288.4,290.6 281.1,284.0" fill="#8a857b" stroke="#1c1c1c" stroke-width="0.40" stroke-linejoin="round" /><polygon points="297.4,284.3 304.9,290.7 296.2,297.6 288.8,291.0" fill="#66625a" stroke="#1c1c1c" stroke-width="0.80" stroke-linejoin="round" /><polygon points="297.7,285.6 302.5,289.8 297.1,294.0 292.4,289.8" fill="#a29c90" stroke="#1c1c1c" stroke-width="0.55" stroke-linejoin="round" /><polygon points="292.4,289.8 297.1,294.0 296.2,297.6 288.8,291.0" fill="#8a857b" stroke="#1c1c1c" stroke-width="0.40" stroke-linejoin="round" /><polygon points="305.3,291.1 312.8,297.6 304.0,304.5 296.6,298.0" fill="#66625a" stroke="#1c1c1c" stroke-width="0.80" stroke-linejoin="round" /><polygon points="305.6,292.5 310.4,296.6 304.9,300.9 300.2,296.7" fill="#a29c90" stroke="#1c1c1c" stroke-width="0.55" stroke-linejoin="round" /><polygon points="300.2,296.7 304.9,300.9 304.0,304.5 296.6,298.0" fill="#8a857b" stroke="#1c1c1c" stroke-width="0.40" stroke-linejoin="round" /><polygon points="313.3,297.9 320.8,304.4 311.7,311.5 304.4,304.9" fill="#66625a" stroke="#1c1c1c" stroke-width="0.80" stroke-linejoin="round" /><polygon points="313.5,299.3 318.3,303.5 312.7,307.8 308.0,303.6" fill="#a29c90" stroke="#1c1c1c" stroke-width="0.55" stroke-linejoin="round" /><polygon points="308.0,303.6 312.7,307.8 311.7,311.5 304.4,304.9" fill="#8a857b" stroke="#1c1c1c" stroke-width="0.40" stroke-linejoin="round" /><polygon points="321.2,304.8 328.7,311.3 319.5,318.4 312.1,311.9" fill="#66625a" stroke="#1c1c1c" stroke-width="0.80" stroke-linejoin="round" /><polygon points="321.4,306.2 326.2,310.3 320.5,314.8 315.8,310.6" fill="#a29c90" stroke="#1c1c1c" stroke-width="0.55" stroke-linejoin="round" /><polygon points="315.8,310.6 320.5,314.8 319.5,318.4 312.1,311.9" fill="#8a857b" stroke="#1c1c1c" stroke-width="0.40" stroke-linejoin="round" /><polygon points="329.1,311.6 336.6,318.1 327.3,325.4 319.9,318.8" fill="#66625a" stroke="#1c1c1c" stroke-width="0.80" stroke-linejoin="round" /><polygon points="329.3,313.0 334.1,317.2 328.3,321.7 323.6,317.5" fill="#a29c90" stroke="#1c1c1c" stroke-width="0.55" stroke-linejoin="round" /><polygon points="323.6,317.5 328.3,321.7 327.3,325.4 319.9,318.8" fill="#8a857b" stroke="#1c1c1c" stroke-width="0.40" stroke-linejoin="round" /><polygon points="337.0,318.5 344.5,324.9 335.0,332.4 327.7,325.8" fill="#66625a" stroke="#1c1c1c" stroke-width="0.80" stroke-linejoin="round" /><polygon points="337.2,319.9 342.0,324.0 336.1,328.6 331.4,324.4" fill="#a29c90" stroke="#1c1c1c" stroke-width="0.55" stroke-linejoin="round" /><polygon points="331.4,324.4 336.1,328.6 335.0,332.4 327.7,325.8" fill="#8a857b" stroke="#1c1c1c" stroke-width="0.40" stroke-linejoin="round" /><polygon points="344.9,325.3 352.4,331.8 342.8,339.3 335.4,332.7" fill="#66625a" stroke="#1c1c1c" stroke-width="0.80" stroke-linejoin="round" /><polygon points="345.1,326.7 349.9,330.9 344.0,335.5 339.2,331.3" fill="#a29c90" stroke="#1c1c1c" stroke-width="0.55" stroke-linejoin="round" /><polygon points="339.2,331.3 344.0,335.5 342.8,339.3 335.4,332.7" fill="#8a857b" stroke="#1c1c1c" stroke-width="0.40" stroke-linejoin="round" /><polygon points="352.8,332.1 360.3,338.6 350.5,346.3 343.2,339.7" fill="#66625a" stroke="#1c1c1c" stroke-width="0.80" stroke-linejoin="round" /><polygon points="353.0,333.6 357.8,337.7 351.8,342.4 347.0,338.3" fill="#a29c90" stroke="#1c1c1c" stroke-width="0.55" stroke-linejoin="round" /><polygon points="347.0,338.3 351.8,342.4 350.5,346.3 343.2,339.7" fill="#8a857b" stroke="#1c1c1c" stroke-width="0.40" stroke-linejoin="round" /><polygon points="246.1,252.7 259.3,264.5 251.3,270.8 238.4,258.8" fill="#66625a" stroke="#1c1c1c" stroke-width="0.80" stroke-linejoin="round" /><polygon points="246.5,254.1 257.0,263.5 252.0,267.4 241.6,257.9" fill="#a29c90" stroke="#1c1c1c" stroke-width="0.55" stroke-linejoin="round" /><polygon points="241.6,257.9 252.0,267.4 251.3,270.8 238.4,258.8" fill="#8a857b" stroke="#1c1c1c" stroke-width="0.40" stroke-linejoin="round" /><polygon points="259.7,264.9 267.1,271.5 258.9,277.9 251.7,271.2" fill="#66625a" stroke="#1c1c1c" stroke-width="0.80" stroke-linejoin="round" /><polygon points="260.0,266.3 264.7,270.5 259.7,274.4 255.0,270.2" fill="#a29c90" stroke="#1c1c1c" stroke-width="0.55" stroke-linejoin="round" /><polygon points="255.0,270.2 259.7,274.4 258.9,277.9 251.7,271.2" fill="#8a857b" stroke="#1c1c1c" stroke-width="0.40" stroke-linejoin="round" /><polygon points="267.5,271.9 274.8,278.5 266.5,285.0 259.3,278.3" fill="#66625a" stroke="#1c1c1c" stroke-width="0.80" stroke-linejoin="round" /><polygon points="267.8,273.2 272.5,277.4 267.3,281.5 262.7,277.2" fill="#a29c90" stroke="#1c1c1c" stroke-width="0.55" stroke-linejoin="round" /><polygon points="262.7,277.2 267.3,281.5 266.5,285.0 259.3,278.3" fill="#8a857b" stroke="#1c1c1c" stroke-width="0.40" stroke-linejoin="round" /><polygon points="275.3,278.8 282.6,285.4 274.2,292.1 266.9,285.4" fill="#66625a" stroke="#1c1c1c" stroke-width="0.80" stroke-linejoin="round" /><polygon points="275.5,280.2 280.2,284.4 275.0,288.5 270.4,284.2" fill="#a29c90" stroke="#1c1c1c" stroke-width="0.55" stroke-linejoin="round" /><polygon points="270.4,284.2 275.0,288.5 274.2,292.1 266.9,285.4" fill="#8a857b" stroke="#1c1c1c" stroke-width="0.40" stroke-linejoin="round" /><polygon points="283.0,285.8 290.4,292.4 281.8,299.1 274.6,292.4" fill="#66625a" stroke="#1c1c1c" stroke-width="0.80" stroke-linejoin="round" /><polygon points="283.3,287.1 288.0,291.4 282.7,295.5 278.0,291.3" fill="#a29c90" stroke="#1c1c1c" stroke-width="0.55" stroke-linejoin="round" /><polygon points="278.0,291.3 282.7,295.5 281.8,299.1 274.6,292.4" fill="#8a857b" stroke="#1c1c1c" stroke-width="0.40" stroke-linejoin="round" /><polygon points="290.8,292.7 298.1,299.3 289.4,306.2 282.2,299.5" fill="#66625a" stroke="#1c1c1c" stroke-width="0.80" stroke-linejoin="round" /><polygon points="291.0,294.1 295.7,298.3 290.3,302.6 285.7,298.3" fill="#a29c90" stroke="#1c1c1c" stroke-width="0.55" stroke-linejoin="round" /><polygon points="285.7,298.3 290.3,302.6 289.4,306.2 282.2,299.5" fill="#8a857b" stroke="#1c1c1c" stroke-width="0.40" stroke-linejoin="round" /><polygon points="298.6,299.7 305.9,306.3 297.0,313.3 289.8,306.6" fill="#66625a" stroke="#1c1c1c" stroke-width="0.80" stroke-linejoin="round" /><polygon points="298.8,301.1 303.5,305.3 298.0,309.6 293.3,305.3" fill="#a29c90" stroke="#1c1c1c" stroke-width="0.55" stroke-linejoin="round" /><polygon points="293.3,305.3 298.0,309.6 297.0,313.3 289.8,306.6" fill="#8a857b" stroke="#1c1c1c" stroke-width="0.40" stroke-linejoin="round" /><polygon points="306.3,306.6 313.7,313.2 304.6,320.3 297.4,313.6" fill="#66625a" stroke="#1c1c1c" stroke-width="0.80" stroke-linejoin="round" /><polygon points="306.5,308.0 311.2,312.3 305.6,316.6 301.0,312.4" fill="#a29c90" stroke="#1c1c1c" stroke-width="0.55" stroke-linejoin="round" /><polygon points="301.0,312.4 305.6,316.6 304.6,320.3 297.4,313.6" fill="#8a857b" stroke="#1c1c1c" stroke-width="0.40" stroke-linejoin="round" /><polygon points="314.1,313.6 321.4,320.2 312.2,327.4 305.0,320.7" fill="#66625a" stroke="#1c1c1c" stroke-width="0.80" stroke-linejoin="round" /><polygon points="314.3,315.0 319.0,319.2 313.3,323.7 308.7,319.4" fill="#a29c90" stroke="#1c1c1c" stroke-width="0.55" stroke-linejoin="round" /><polygon points="308.7,319.4 313.3,323.7 312.2,327.4 305.0,320.7" fill="#8a857b" stroke="#1c1c1c" stroke-width="0.40" stroke-linejoin="round" /><polygon points="321.8,320.6 329.2,327.1 319.8,334.5 312.6,327.8" fill="#66625a" stroke="#1c1c1c" stroke-width="0.80" stroke-linejoin="round" /><polygon points="322.0,322.0 326.7,326.2 321.0,330.7 316.3,326.5" fill="#a29c90" stroke="#1c1c1c" stroke-width="0.55" stroke-linejoin="round" /><polygon points="316.3,326.5 321.0,330.7 319.8,334.5 312.6,327.8" fill="#8a857b" stroke="#1c1c1c" stroke-width="0.40" stroke-linejoin="round" /><polygon points="329.6,327.5 337.0,334.1 327.4,341.5 320.2,334.8" fill="#66625a" stroke="#1c1c1c" stroke-width="0.80" stroke-linejoin="round" /><polygon points="329.8,328.9 334.5,333.2 328.6,337.8 324.0,333.5" fill="#a29c90" stroke="#1c1c1c" stroke-width="0.55" stroke-linejoin="round" /><polygon points="324.0,333.5 328.6,337.8 327.4,341.5 320.2,334.8" fill="#8a857b" stroke="#1c1c1c" stroke-width="0.40" stroke-linejoin="round" /><polygon points="337.4,334.5 344.7,341.1 335.1,348.6 327.8,341.9" fill="#66625a" stroke="#1c1c1c" stroke-width="0.80" stroke-linejoin="round" /><polygon points="337.5,335.9 342.2,340.1 336.3,344.8 331.6,340.5" fill="#a29c90" stroke="#1c1c1c" stroke-width="0.55" stroke-linejoin="round" /><polygon points="331.6,340.5 336.3,344.8 335.1,348.6 327.8,341.9" fill="#8a857b" stroke="#1c1c1c" stroke-width="0.40" stroke-linejoin="round" /><polygon points="345.1,341.4 352.5,348.0 342.7,355.7 335.5,349.0" fill="#66625a" stroke="#1c1c1c" stroke-width="0.80" stroke-linejoin="round" /><polygon points="345.3,342.9 350.0,347.1 343.9,351.8 339.3,347.6" fill="#a29c90" stroke="#1c1c1c" stroke-width="0.55" stroke-linejoin="round" /><polygon points="339.3,347.6 343.9,351.8 342.7,355.7 335.5,349.0" fill="#8a857b" stroke="#1c1c1c" stroke-width="0.40" stroke-linejoin="round" /><polygon points="238.4,258.8 253.2,272.6 245.2,278.9 230.7,265.0" fill="#66625a" stroke="#1c1c1c" stroke-width="0.80" stroke-linejoin="round" /><polygon points="238.7,260.2 250.9,271.6 245.9,275.5 233.9,264.0" fill="#a29c90" stroke="#1c1c1c" stroke-width="0.55" stroke-linejoin="round" /><polygon points="233.9,264.0 245.9,275.5 245.2,278.9 230.7,265.0" fill="#8a857b" stroke="#1c1c1c" stroke-width="0.40" stroke-linejoin="round" /><polygon points="253.6,273.0 260.8,279.7 252.6,286.1 245.6,279.3" fill="#66625a" stroke="#1c1c1c" stroke-width="0.80" stroke-linejoin="round" /><polygon points="253.9,274.3 258.5,278.6 253.4,282.6 248.9,278.3" fill="#a29c90" stroke="#1c1c1c" stroke-width="0.55" stroke-linejoin="round" /><polygon points="248.9,278.3 253.4,282.6 252.6,286.1 245.6,279.3" fill="#8a857b" stroke="#1c1c1c" stroke-width="0.40" stroke-linejoin="round" /><polygon points="261.2,280.1 268.4,286.7 260.1,293.3 253.0,286.5" fill="#66625a" stroke="#1c1c1c" stroke-width="0.80" stroke-linejoin="round" /><polygon points="261.5,281.4 266.1,285.7 261.0,289.8 256.4,285.4" fill="#a29c90" stroke="#1c1c1c" stroke-width="0.55" stroke-linejoin="round" /><polygon points="256.4,285.4 261.0,289.8 260.1,293.3 253.0,286.5" fill="#8a857b" stroke="#1c1c1c" stroke-width="0.40" stroke-linejoin="round" /><polygon points="268.9,287.1 276.1,293.8 267.6,300.5 260.5,293.7" fill="#66625a" stroke="#1c1c1c" stroke-width="0.80" stroke-linejoin="round" /><polygon points="269.1,288.5 273.7,292.8 268.5,296.9 263.9,292.6" fill="#a29c90" stroke="#1c1c1c" stroke-width="0.55" stroke-linejoin="round" /><polygon points="263.9,292.6 268.5,296.9 267.6,300.5 260.5,293.7" fill="#8a857b" stroke="#1c1c1c" stroke-width="0.40" stroke-linejoin="round" /><polygon points="276.5,294.2 283.7,300.9 275.0,307.7 268.0,300.9" fill="#66625a" stroke="#1c1c1c" stroke-width="0.80" stroke-linejoin="round" /><polygon points="276.7,295.6 281.3,299.9 276.0,304.1 271.4,299.7" fill="#a29c90" stroke="#1c1c1c" stroke-width="0.55" stroke-linejoin="round" /><polygon points="271.4,299.7 276.0,304.1 275.0,307.7 268.0,300.9" fill="#8a857b" stroke="#1c1c1c" stroke-width="0.40" stroke-linejoin="round" /><polygon points="284.1,301.3 291.3,308.0 282.5,314.9 275.4,308.1" fill="#66625a" stroke="#1c1c1c" stroke-width="0.80" stroke-linejoin="round" /><polygon points="284.3,302.7 288.9,307.0 283.5,311.2 278.9,306.9" fill="#a29c90" stroke="#1c1c1c" stroke-width="0.55" stroke-linejoin="round" /><polygon points="278.9,306.9 283.5,311.2 282.5,314.9 275.4,308.1" fill="#8a857b" stroke="#1c1c1c" stroke-width="0.40" stroke-linejoin="round" /><polygon points="291.7,308.3 298.9,315.0 289.9,322.0 282.9,315.2" fill="#66625a" stroke="#1c1c1c" stroke-width="0.80" stroke-linejoin="round" /><polygon points="291.9,309.7 296.5,314.0 291.0,318.4 286.4,314.0" fill="#a29c90" stroke="#1c1c1c" stroke-width="0.55" stroke-linejoin="round" /><polygon points="286.4,314.0 291.0,318.4 289.9,322.0 282.9,315.2" fill="#8a857b" stroke="#1c1c1c" stroke-width="0.40" stroke-linejoin="round" /><polygon points="299.3,315.4 306.5,322.1 297.4,329.2 290.3,322.4" fill="#66625a" stroke="#1c1c1c" stroke-width="0.80" stroke-linejoin="round" /><polygon points="299.5,316.8 304.1,321.1 298.5,325.5 293.9,321.2" fill="#a29c90" stroke="#1c1c1c" stroke-width="0.55" stroke-linejoin="round" /><polygon points="293.9,321.2 298.5,325.5 297.4,329.2 290.3,322.4" fill="#8a857b" stroke="#1c1c1c" stroke-width="0.40" stroke-linejoin="round" /><polygon points="306.9,322.5 314.1,329.2 304.9,336.4 297.8,329.6" fill="#66625a" stroke="#1c1c1c" stroke-width="0.80" stroke-linejoin="round" /><polygon points="307.1,323.9 311.7,328.2 306.0,332.7 301.4,328.3" fill="#a29c90" stroke="#1c1c1c" stroke-width="0.55" stroke-linejoin="round" /><polygon points="301.4,328.3 306.0,332.7 304.9,336.4 297.8,329.6" fill="#8a857b" stroke="#1c1c1c" stroke-width="0.40" stroke-linejoin="round" /><polygon points="314.5,329.5 321.7,336.2 312.3,343.6 305.3,336.8" fill="#66625a" stroke="#1c1c1c" stroke-width="0.80" stroke-linejoin="round" /><polygon points="314.7,331.0 319.3,335.3 313.5,339.8 308.9,335.5" fill="#a29c90" stroke="#1c1c1c" stroke-width="0.55" stroke-linejoin="round" /><polygon points="308.9,335.5 313.5,339.8 312.3,343.6 305.3,336.8" fill="#8a857b" stroke="#1c1c1c" stroke-width="0.40" stroke-linejoin="round" /><polygon points="322.1,336.6 329.3,343.3 319.8,350.8 312.7,344.0" fill="#66625a" stroke="#1c1c1c" stroke-width="0.80" stroke-linejoin="round" /><polygon points="322.3,338.1 326.9,342.3 321.0,347.0 316.5,342.6" fill="#a29c90" stroke="#1c1c1c" stroke-width="0.55" stroke-linejoin="round" /><polygon points="316.5,342.6 321.0,347.0 319.8,350.8 312.7,344.0" fill="#8a857b" stroke="#1c1c1c" stroke-width="0.40" stroke-linejoin="round" /><polygon points="329.8,343.7 337.0,350.4 327.3,358.0 320.2,351.2" fill="#66625a" stroke="#1c1c1c" stroke-width="0.80" stroke-linejoin="round" /><polygon points="329.9,345.1 334.5,349.4 328.5,354.1 324.0,349.8" fill="#a29c90" stroke="#1c1c1c" stroke-width="0.55" stroke-linejoin="round" /><polygon points="324.0,349.8 328.5,354.1 327.3,358.0 320.2,351.2" fill="#8a857b" stroke="#1c1c1c" stroke-width="0.40" stroke-linejoin="round" /><polygon points="337.4,350.7 344.6,357.4 334.7,365.1 327.6,358.3" fill="#66625a" stroke="#1c1c1c" stroke-width="0.80" stroke-linejoin="round" /><polygon points="337.5,352.2 342.1,356.5 336.0,361.3 331.5,356.9" fill="#a29c90" stroke="#1c1c1c" stroke-width="0.55" stroke-linejoin="round" /><polygon points="331.5,356.9 336.0,361.3 334.7,365.1 327.6,358.3" fill="#8a857b" stroke="#1c1c1c" stroke-width="0.40" stroke-linejoin="round" /><polygon points="230.7,265.0 241.5,275.3 233.5,281.6 222.9,271.1" fill="#66625a" stroke="#1c1c1c" stroke-width="0.80" stroke-linejoin="round" /><polygon points="230.9,266.3 239.2,274.3 234.3,278.1 226.1,270.1" fill="#a29c90" stroke="#1c1c1c" stroke-width="0.55" stroke-linejoin="round" /><polygon points="226.1,270.1 234.3,278.1 233.5,281.6 222.9,271.1" fill="#8a857b" stroke="#1c1c1c" stroke-width="0.40" stroke-linejoin="round" /><polygon points="241.8,275.7 248.9,282.5 240.8,288.9 233.9,282.0" fill="#66625a" stroke="#1c1c1c" stroke-width="0.80" stroke-linejoin="round" /><polygon points="242.1,277.1 246.6,281.5 241.6,285.4 237.2,281.0" fill="#a29c90" stroke="#1c1c1c" stroke-width="0.55" stroke-linejoin="round" /><polygon points="237.2,281.0 241.6,285.4 240.8,288.9 233.9,282.0" fill="#8a857b" stroke="#1c1c1c" stroke-width="0.40" stroke-linejoin="round" /><polygon points="249.3,282.9 304.9,336.4 295.6,343.6 241.2,289.3" fill="#66625a" stroke="#1c1c1c" stroke-width="0.80" stroke-linejoin="round" /><polygon points="249.6,284.3 302.5,335.4 296.8,339.9 244.5,288.3" fill="#a29c90" stroke="#1c1c1c" stroke-width="0.55" stroke-linejoin="round" /><polygon points="244.5,288.3 296.8,339.9 295.6,343.6 241.2,289.3" fill="#8a857b" stroke="#1c1c1c" stroke-width="0.40" stroke-linejoin="round" /><polygon points="305.3,336.8 312.3,343.6 302.9,350.9 296.0,344.0" fill="#66625a" stroke="#1c1c1c" stroke-width="0.80" stroke-linejoin="round" /><polygon points="305.4,338.2 309.9,342.6 304.1,347.1 299.7,342.7" fill="#a29c90" stroke="#1c1c1c" stroke-width="0.55" stroke-linejoin="round" /><polygon points="299.7,342.7 304.1,347.1 302.9,350.9 296.0,344.0" fill="#8a857b" stroke="#1c1c1c" stroke-width="0.40" stroke-linejoin="round" /><polygon points="312.7,344.0 323.5,354.4 313.9,361.9 303.3,351.3" fill="#66625a" stroke="#1c1c1c" stroke-width="0.80" stroke-linejoin="round" /><polygon points="312.9,345.4 321.1,353.4 315.2,358.0 307.0,350.0" fill="#a29c90" stroke="#1c1c1c" stroke-width="0.55" stroke-linejoin="round" /><polygon points="307.0,350.0 315.2,358.0 313.9,361.9 303.3,351.3" fill="#8a857b" stroke="#1c1c1c" stroke-width="0.40" stroke-linejoin="round" /><ellipse cx="380.5" cy="335.9" rx="3.7" ry="3.1" fill="#5f5b54" stroke="#1e1e1e" stroke-width="0.7"/><ellipse cx="380.2" cy="334.9" rx="2.5" ry="2.0" fill="#a39d91" stroke="#333" stroke-width="0.3"/><ellipse cx="385.9" cy="340.4" rx="3.7" ry="3.1" fill="#5f5b54" stroke="#1e1e1e" stroke-width="0.7"/><ellipse cx="385.6" cy="339.4" rx="2.5" ry="2.0" fill="#a39d91" stroke="#333" stroke-width="0.3"/><ellipse cx="391.4" cy="344.9" rx="3.7" ry="3.1" fill="#5f5b54" stroke="#1e1e1e" stroke-width="0.7"/><ellipse cx="391.1" cy="343.9" rx="2.5" ry="2.0" fill="#a39d91" stroke="#333" stroke-width="0.3"/><ellipse cx="396.9" cy="349.4" rx="3.7" ry="3.1" fill="#5f5b54" stroke="#1e1e1e" stroke-width="0.7"/><ellipse cx="396.6" cy="348.4" rx="2.5" ry="2.0" fill="#a39d91" stroke="#333" stroke-width="0.3"/><ellipse cx="402.3" cy="353.9" rx="3.7" ry="3.1" fill="#5f5b54" stroke="#1e1e1e" stroke-width="0.7"/><ellipse cx="402.0" cy="352.9" rx="2.5" ry="2.0" fill="#a39d91" stroke="#333" stroke-width="0.3"/><ellipse cx="374.1" cy="340.9" rx="3.7" ry="3.1" fill="#5f5b54" stroke="#1e1e1e" stroke-width="0.7"/><ellipse cx="373.8" cy="339.9" rx="2.5" ry="2.0" fill="#a39d91" stroke="#333" stroke-width="0.3"/><ellipse cx="379.4" cy="345.4" rx="3.7" ry="3.1" fill="#5f5b54" stroke="#1e1e1e" stroke-width="0.7"/><ellipse cx="379.1" cy="344.4" rx="2.5" ry="2.0" fill="#a39d91" stroke="#333" stroke-width="0.3"/><ellipse cx="384.8" cy="350.0" rx="3.7" ry="3.1" fill="#5f5b54" stroke="#1e1e1e" stroke-width="0.7"/><ellipse cx="384.5" cy="349.0" rx="2.5" ry="2.0" fill="#a39d91" stroke="#333" stroke-width="0.3"/><ellipse cx="390.2" cy="354.6" rx="3.7" ry="3.1" fill="#5f5b54" stroke="#1e1e1e" stroke-width="0.7"/><ellipse cx="389.9" cy="353.6" rx="2.5" ry="2.0" fill="#a39d91" stroke="#333" stroke-width="0.3"/><ellipse cx="395.6" cy="359.1" rx="3.7" ry="3.1" fill="#5f5b54" stroke="#1e1e1e" stroke-width="0.7"/><ellipse cx="395.3" cy="358.1" rx="2.5" ry="2.0" fill="#a39d91" stroke="#333" stroke-width="0.3"/><ellipse cx="367.6" cy="345.9" rx="3.7" ry="3.1" fill="#5f5b54" stroke="#1e1e1e" stroke-width="0.7"/><ellipse cx="367.3" cy="344.9" rx="2.5" ry="2.0" fill="#a39d91" stroke="#333" stroke-width="0.3"/><ellipse cx="373.0" cy="350.5" rx="3.7" ry="3.1" fill="#5f5b54" stroke="#1e1e1e" stroke-width="0.7"/><ellipse cx="372.7" cy="349.5" rx="2.5" ry="2.0" fill="#a39d91" stroke="#333" stroke-width="0.3"/><ellipse cx="378.3" cy="355.1" rx="3.7" ry="3.1" fill="#5f5b54" stroke="#1e1e1e" stroke-width="0.7"/><ellipse cx="378.0" cy="354.1" rx="2.5" ry="2.0" fill="#a39d91" stroke="#333" stroke-width="0.3"/><ellipse cx="383.6" cy="359.7" rx="3.7" ry="3.1" fill="#5f5b54" stroke="#1e1e1e" stroke-width="0.7"/><ellipse cx="383.3" cy="358.7" rx="2.5" ry="2.0" fill="#a39d91" stroke="#333" stroke-width="0.3"/><ellipse cx="388.9" cy="364.3" rx="3.7" ry="3.1" fill="#5f5b54" stroke="#1e1e1e" stroke-width="0.7"/><ellipse cx="388.6" cy="363.3" rx="2.5" ry="2.0" fill="#a39d91" stroke="#333" stroke-width="0.3"/><ellipse cx="361.2" cy="350.9" rx="3.7" ry="3.1" fill="#5f5b54" stroke="#1e1e1e" stroke-width="0.7"/><ellipse cx="360.9" cy="349.9" rx="2.5" ry="2.0" fill="#a39d91" stroke="#333" stroke-width="0.3"/><ellipse cx="366.5" cy="355.6" rx="3.7" ry="3.1" fill="#5f5b54" stroke="#1e1e1e" stroke-width="0.7"/><ellipse cx="366.2" cy="354.6" rx="2.5" ry="2.0" fill="#a39d91" stroke="#333" stroke-width="0.3"/><ellipse cx="371.7" cy="360.2" rx="3.7" ry="3.1" fill="#5f5b54" stroke="#1e1e1e" stroke-width="0.7"/><ellipse cx="371.4" cy="359.2" rx="2.5" ry="2.0" fill="#a39d91" stroke="#333" stroke-width="0.3"/><ellipse cx="377.0" cy="364.9" rx="3.7" ry="3.1" fill="#5f5b54" stroke="#1e1e1e" stroke-width="0.7"/><ellipse cx="376.7" cy="363.9" rx="2.5" ry="2.0" fill="#a39d91" stroke="#333" stroke-width="0.3"/><ellipse cx="382.2" cy="369.6" rx="3.7" ry="3.1" fill="#5f5b54" stroke="#1e1e1e" stroke-width="0.7"/><ellipse cx="381.9" cy="368.6" rx="2.5" ry="2.0" fill="#a39d91" stroke="#333" stroke-width="0.3"/><polygon points="352.5,351.9 375.1,372.3 347.2,394.1 325.8,372.8" fill="#77726a" stroke="#1c1c1c" stroke-width="0.60" stroke-linejoin="round" /><line x1="352.5" y1="351.9" x2="347.2" y2="394.1" stroke="#222" stroke-width="0.6"/><line x1="375.1" y1="372.3" x2="325.8" y2="372.8" stroke="#222" stroke-width="0.6"/><ellipse cx="357.9" cy="366.8" rx="4.3" ry="3.3" fill="#8f8a80" stroke="#222" stroke-width="0.6"/><ellipse cx="357.9" cy="366.8" rx="2.8" ry="2.1" fill="none" stroke="#333" stroke-width="0.5"/><ellipse cx="357.9" cy="366.8" rx="1.2" ry="0.9" fill="#555"/><ellipse cx="342.5" cy="378.8" rx="4.3" ry="3.3" fill="#8f8a80" stroke="#222" stroke-width="0.6"/><ellipse cx="342.5" cy="378.8" rx="2.8" ry="2.1" fill="none" stroke="#333" stroke-width="0.5"/><ellipse cx="342.5" cy="378.8" rx="1.2" ry="0.9" fill="#555"/><ellipse cx="343.8" cy="366.8" rx="4.3" ry="3.3" fill="#8f8a80" stroke="#222" stroke-width="0.6"/><ellipse cx="343.8" cy="366.8" rx="2.8" ry="2.1" fill="none" stroke="#333" stroke-width="0.5"/><ellipse cx="343.8" cy="366.8" rx="1.2" ry="0.9" fill="#555"/><ellipse cx="356.5" cy="378.8" rx="4.3" ry="3.3" fill="#8f8a80" stroke="#222" stroke-width="0.6"/><ellipse cx="356.5" cy="378.8" rx="2.8" ry="2.1" fill="none" stroke="#333" stroke-width="0.5"/><ellipse cx="356.5" cy="378.8" rx="1.2" ry="0.9" fill="#555"/><ellipse cx="324.6" cy="363.4" rx="3.5" ry="2.5" fill="#9a9589" stroke="#222" stroke-width="0.5"/><polygon points="777.0,269.0 929.0,372.0 929.0,379.0 777.0,277.0" fill="#57534c" stroke="#1c1c1c" stroke-width="1.00" stroke-linejoin="round" /><polygon points="777.0,268.5 786.0,265.0 937.0,365.0 929.0,372.0" fill="#7e796f" stroke="#1c1c1c" stroke-width="1.00" stroke-linejoin="round" /><polygon points="831.0,224.0 830.5,234.0 823.0,241.5 818.5,238.5 804.0,247.0 801.0,253.0 750.0,297.5 750.0,289.5" fill="#57534c" stroke="#1c1c1c" stroke-width="1.00" stroke-linejoin="round" /><polygon points="743.5,285.0 750.0,289.5 750.0,297.5 743.0,293.5" fill="#4a4741" stroke="#1c1c1c" stroke-width="1.00" stroke-linejoin="round" /><polygon points="823.5,219.5 831.0,224.0 750.0,289.5 743.5,285.0" fill="#7e796f" stroke="#1c1c1c" stroke-width="1.00" stroke-linejoin="round" /><line x1="797" y1="245" x2="803" y2="249" stroke="#222" stroke-width="0.6"/><polygon points="934.0,289.0 933.0,299.0 924.0,308.0 920.5,304.0 908.0,312.0 905.0,320.0 854.0,368.0 854.0,359.0" fill="#57534c" stroke="#1c1c1c" stroke-width="1.00" stroke-linejoin="round" /><polygon points="846.0,354.4 854.0,359.0 854.0,368.0 845.2,362.8" fill="#4a4741" stroke="#1c1c1c" stroke-width="1.00" stroke-linejoin="round" /><polygon points="927.0,284.7 934.0,289.0 854.0,359.0 846.0,354.4" fill="#7e796f" stroke="#1c1c1c" stroke-width="1.00" stroke-linejoin="round" /><line x1="904" y1="305" x2="910" y2="309.5" stroke="#222" stroke-width="0.6"/><polygon points="991.0,325.0 991.0,332.5 911.5,408.5 911.5,401.8" fill="#57534c" stroke="#1c1c1c" stroke-width="1.00" stroke-linejoin="round" /><polygon points="902.5,396.4 911.5,401.8 911.5,408.5 901.9,403.7" fill="#4a4741" stroke="#1c1c1c" stroke-width="1.00" stroke-linejoin="round" /><polygon points="983.6,320.4 991.0,325.0 911.5,401.8 902.5,396.4" fill="#7e796f" stroke="#1c1c1c" stroke-width="1.00" stroke-linejoin="round" /><line x1="957" y1="343.5" x2="963" y2="348" stroke="#222" stroke-width="0.6"/><polygon points="588.6,397.0 783.5,550.0 783.5,554.0 588.6,401.0" fill="#57534c" stroke="#1c1c1c" stroke-width="1.00" stroke-linejoin="round" /><polygon points="783.5,550.0 893.5,441.5 894.5,445.5 783.5,554.0" fill="#4f4c46" stroke="#1c1c1c" stroke-width="1.00" stroke-linejoin="round" /><polygon points="604.6,411.2 656.2,451.0 656.2,458.4 606.8,418.5" fill="#4a4741" stroke="#1c1c1c" stroke-width="0.60" stroke-linejoin="round" /><polygon points="700.5,305.0 893.5,441.5 783.5,550.0 588.6,397.0" fill="#807b72" stroke="#1c1c1c" stroke-width="1.00" stroke-linejoin="round" /><polyline points="703.0,309.0 727.0,326.0 772.0,358.0 880.0,433.0" fill="none" stroke="#2a2a2a" stroke-width="0.6"/><polyline points="597.0,399.0 700.0,311.0" fill="none" stroke="#2a2a2a" stroke-width="0.6"/><defs><linearGradient id="fl" x1="0" y1="0" x2="1" y2="1"><stop offset="0" stop-color="#716c64"/><stop offset="0.5" stop-color="#7f7a71"/><stop offset="1" stop-color="#75706a"/></linearGradient><linearGradient id="wl" x1="0" y1="0" x2="1" y2="0"><stop offset="0" stop-color="#38362f"/><stop offset="1" stop-color="#55524b"/></linearGradient></defs><polygon points="699.5,336.7 861.6,452.7 784.0,530.0 614.0,397.0" fill="url(#fl)" stroke="#1c1c1c" stroke-width="0.70" stroke-linejoin="round" /><polygon points="699.1,320.3 610.1,391.9 614.0,397.0 699.5,336.7" fill="#4a4741" stroke="#1c1c1c" stroke-width="0.70" stroke-linejoin="round" /><polygon points="699.1,320.3 873.2,444.7 861.6,452.7 699.5,336.7" fill="url(#wl)" stroke="#1c1c1c" stroke-width="0.70" stroke-linejoin="round" /><polygon points="700.0,337.0 711.0,344.0 706.0,348.0 696.0,341.0" fill="#807b72" stroke="#1c1c1c" stroke-width="0.50" stroke-linejoin="round" /><polygon points="805.8,492.9 852.3,451.6 858.7,455.5 811.0,499.4" fill="#6c675f" stroke="#1c1c1c" stroke-width="0.60" stroke-linejoin="round" /><circle cx="701.0" cy="314.0" r="0.9" fill="#222"/><circle cx="611.0" cy="385.5" r="0.9" fill="#222"/><circle cx="877.0" cy="439.0" r="0.9" fill="#222"/><circle cx="783.5" cy="540.0" r="0.9" fill="#222"/><circle cx="750.0" cy="350.0" r="0.9" fill="#222"/><circle cx="655.0" cy="450.0" r="0.9" fill="#222"/><polygon points="535.2,464.0 583.4,502.9 583.4,513.9 535.2,474.0" fill="#5d5951" stroke="#1c1c1c" stroke-width="1.00" stroke-linejoin="round" /><polygon points="583.4,502.9 590.2,498.7 590.2,509.7 583.4,513.9" fill="#4a4741" stroke="#1c1c1c" stroke-width="1.00" stroke-linejoin="round" /><polygon points="545.3,459.8 590.2,498.7 583.4,502.9 535.2,464.0" fill="#7d786f" stroke="#1c1c1c" stroke-width="1.00" stroke-linejoin="round" /><polygon points="550.0,481.0 574.0,500.0 574.0,503.0 550.0,484.0" fill="#bdb7aa" stroke="#1c1c1c" stroke-width="0.50" stroke-linejoin="round" /><polygon points="538.0,469.0 550.0,478.0 550.0,482.0 538.0,473.0" fill="#3a3834" stroke="#1c1c1c" stroke-width="0.40" stroke-linejoin="round" /><polygon points="866.5,536.3 870.7,538.7 870.7,545.7 866.5,542.3" fill="#4a4741" stroke="#1c1c1c" stroke-width="1.00" stroke-linejoin="round" /><polygon points="870.7,538.7 917.9,494.5 917.9,497.5 870.7,545.7" fill="#5d5951" stroke="#1c1c1c" stroke-width="1.00" stroke-linejoin="round" /><polygon points="914.3,491.5 917.9,494.5 870.7,538.7 866.5,536.3" fill="#7d786f" stroke="#1c1c1c" stroke-width="1.00" stroke-linejoin="round" /><polygon points="874.4,539.0 884.0,531.0 887.7,533.0 887.7,539.0 878.0,546.0 874.4,544.0" fill="#5a564f" stroke="#1c1c1c" stroke-width="0.50" stroke-linejoin="round" /><polygon points="898.6,514.0 907.0,507.0 910.7,509.0 910.7,515.0 902.0,522.0 898.6,520.0" fill="#5a564f" stroke="#1c1c1c" stroke-width="0.50" stroke-linejoin="round" /><ellipse cx="917.5" cy="503" rx="3.5" ry="3" fill="#8c877d" stroke="#333" stroke-width="0.5"/><polygon points="591.5,442.0 586.0,445.5 588.7,448.0 594.0,444.5" fill="#6f6b63" stroke="#1c1c1c" stroke-width="0.70" stroke-linejoin="round" /><polygon points="589.2,438.1 595.5,442.9 595.5,446.4 589.2,441.6" fill="#5a564f" stroke="#1c1c1c" stroke-width="0.60" stroke-linejoin="round" /><polygon points="595.5,442.9 597.9,440.5 597.9,444.0 595.5,446.4" fill="#45423d" stroke="#1c1c1c" stroke-width="0.60" stroke-linejoin="round" /><polygon points="589.2,438.1 592.1,435.6 597.9,440.5 595.5,442.9" fill="#8a857b" stroke="#1c1c1c" stroke-width="0.60" stroke-linejoin="round" /><polygon points="612.0,467.0 619.0,462.5 625.0,470.0 617.5,475.5 611.0,471.5" fill="#6f6b63" stroke="#1c1c1c" stroke-width="0.70" stroke-linejoin="round" /><polygon points="617.3,459.8 625.5,468.1 625.5,471.6 617.3,463.3" fill="#5a564f" stroke="#1c1c1c" stroke-width="0.60" stroke-linejoin="round" /><polygon points="625.5,468.1 628.9,465.7 628.9,469.2 625.5,471.6" fill="#45423d" stroke="#1c1c1c" stroke-width="0.60" stroke-linejoin="round" /><polygon points="617.3,459.8 620.2,458.4 628.9,465.7 625.5,468.1" fill="#8a857b" stroke="#1c1c1c" stroke-width="0.60" stroke-linejoin="round" /><polygon points="655.0,309.5 649.5,312.5 651.5,316.0 657.0,313.0" fill="#6f6b63" stroke="#1c1c1c" stroke-width="0.70" stroke-linejoin="round" /><polygon points="653.5,306.0 659.0,311.5 659.0,315.5 653.5,310.0" fill="#5a564f" stroke="#1c1c1c" stroke-width="0.60" stroke-linejoin="round" /><polygon points="659.0,311.5 662.5,309.0 662.5,313.0 659.0,315.5" fill="#45423d" stroke="#1c1c1c" stroke-width="0.60" stroke-linejoin="round" /><polygon points="653.5,306.0 657.0,304.5 662.5,309.0 659.0,311.5" fill="#8a857b" stroke="#1c1c1c" stroke-width="0.60" stroke-linejoin="round" /><polygon points="389.0,283.0 393.0,282.0 396.0,286.0 392.0,287.0" fill="#4a4741" stroke="#1c1c1c" stroke-width="0.60" stroke-linejoin="round" /></svg><svg class="a" style="left:960px;top:82px" width="62" height="58" viewBox="960 82 62 58"><defs><filter id="vcb"><feGaussianBlur stdDeviation="2"/></filter></defs><ellipse cx="993" cy="124" rx="17" ry="6" fill="#000" opacity="0.10" filter="url(#vcb)"/><polygon points="990.9,86.8 1009.7,95.5 990.5,104.5 973.0,95.1" fill="#f2f2f2" stroke="#8a8a8a" stroke-width="0.6" stroke-dasharray="2.5 1.5"/><polygon points="973.0,95.1 990.5,104.5 989.8,127.6 974.1,117.1" fill="#e6e6e6" stroke="#8a8a8a" stroke-width="0.6" stroke-dasharray="2.5 1.5"/><polygon points="990.5,104.5 1009.7,95.5 1007.6,115.5 989.8,127.6" fill="#dcdcdc" stroke="#8a8a8a" stroke-width="0.6" stroke-dasharray="2.5 1.5"/><text x="991" y="99" font-size="9" fill="#6a6a6a" text-anchor="middle" font-family="Liberation Sans" transform="rotate(-30 991 96)">上</text><text x="981" y="115" font-size="8" fill="#7a7a7a" text-anchor="middle" font-family="Liberation Sans">前</text><text x="999" y="114" font-size="8" fill="#7a7a7a" text-anchor="middle" font-family="Liberation Sans">右</text><line x1="973.7" y1="115" x2="970.2" y2="91" stroke="#3b4de0" stroke-width="1"/><line x1="973.7" y1="115" x2="995" y2="132" stroke="#e04b4b" stroke-width="0.9"/><text x="967" y="92" font-size="6" fill="#3b4de0" font-family="Liberation Sans">Z</text><text x="994" y="137" font-size="6" fill="#e06060" font-family="Liberation Sans">X</text></svg><div class="a" style="left:451.8px;top:600.3px;width:125.2px;height:14.3px;background:rgba(236,236,236,0.9);border-radius:1px"></div><svg class="a" style="left:452.5px;top:601.5px" width="10" height="10" viewBox="0 0 10 10"><path d="M5 0.5V9.5M1 5.5Q5 2.5 9 5.5Q5 8.5 1 5.5" fill="none" stroke="#444" stroke-width="1.1"/><circle cx="5" cy="2" r="1.5" fill="#444"/><path d="M0.5 5L2 4V7Z" fill="#444"/></svg><svg class="a" style="left:464.5px;top:605px" width="4" height="3" viewBox="0 0 4 3"><path d="M0 0H4L2 3Z" fill="#333"/></svg><svg class="a" style="left:470px;top:601.5px" width="10" height="10" viewBox="0 0 10 10"><rect x="1" y="3" width="8" height="6" rx="1" fill="#d8d8d8" stroke="#666" stroke-width="0.8"/><rect x="3" y="5" width="4" height="2" fill="#888"/><path d="M2 3V1M8 3V1" stroke="#666" stroke-width="0.8"/></svg><svg class="a" style="left:484px;top:601px" width="10" height="11" viewBox="0 0 10 11"><path d="M2.5 10Q0.5 7 1 5.5L2 5L3 7V2Q3 1 4 1.5V6V1Q5 0 6 1V6V1.5Q7 1 7.5 2V6.5V3Q8.5 2.5 9 3.5V7Q9 10 7 10.5Z" fill="#fff" stroke="#444" stroke-width="0.8"/></svg><svg class="a" style="left:498px;top:601.5px" width="10" height="10" viewBox="0 0 10 10"><circle cx="4" cy="5" r="3" fill="#e0f0f8" stroke="#444" stroke-width="0.9"/><path d="M6 7L9 10" stroke="#222" stroke-width="1.5"/><path d="M8 0.5V4M6.2 2.2H9.8" stroke="#444" stroke-width="0.7"/></svg><svg class="a" style="left:512px;top:601px" width="10" height="11" viewBox="0 0 10 11"><rect x="0.5" y="0.5" width="8" height="8" fill="none" stroke="#999" stroke-width="0.6" stroke-dasharray="1 1"/><circle cx="4" cy="4.5" r="3" fill="#e0f0f8" stroke="#444" stroke-width="0.9"/><path d="M6 6.5L9.5 10" stroke="#222" stroke-width="1.5"/></svg><svg class="a" style="left:523.3px;top:605px" width="4" height="3" viewBox="0 0 4 3"><path d="M0 0H4L2 3Z" fill="#333"/></svg><svg class="a" style="left:529px;top:601.5px" width="10" height="10" viewBox="0 0 10 10"><rect x="0.5" y="0.5" width="9" height="7" fill="#6fa8dc" stroke="#4a6e96" stroke-width="0.8"/><rect x="3.5" y="8" width="3" height="1.5" fill="#666"/></svg><svg class="a" style="left:539.7px;top:605px" width="4" height="3" viewBox="0 0 4 3"><path d="M0 0H4L2 3Z" fill="#333"/></svg><svg class="a" style="left:545.5px;top:601.5px" width="9" height="10" viewBox="0 0 9 10"><defs><linearGradient id="vs" x1="0" y1="0" x2="0" y2="1"><stop offset="0" stop-color="#aaa"/><stop offset="1" stop-color="#777"/></linearGradient></defs><rect x="0.5" y="0.5" width="8" height="9" fill="url(#vs)" stroke="#666" stroke-width="0.6"/></svg><svg class="a" style="left:556px;top:605px" width="4" height="3" viewBox="0 0 4 3"><path d="M0 0H4L2 3Z" fill="#333"/></svg><svg class="a" style="left:562px;top:601.5px" width="9" height="10" viewBox="0 0 9 10"><rect x="0.5" y="0.5" width="8" height="9" fill="#6fa3dc" stroke="#3d6da8" stroke-width="0.7"/><path d="M4.5 0.5V9.5M0.5 5H8.5" stroke="#dfe9f5" stroke-width="0.8"/></svg><svg class="a" style="left:572.5px;top:605px" width="4" height="3" viewBox="0 0 4 3"><path d="M0 0H4L2 3Z" fill="#333"/></svg><div class="a" style="left:0;top:0;width:5px;height:30px;background:#e4e8ee"></div><div class="a" style="left:4px;top:0;width:1020px;height:12px;background:#fff"></div><svg class="a" style="left:6px;top:1.5px" width="8" height="9" viewBox="0 0 8 9"><rect x="0" y="0" width="8" height="9" rx="1.5" fill="#f26b1d"/><rect x="1" y="6.5" width="6" height="1.6" fill="#8a2d00"/><path d="M3 1.8H5.5V2.7H4V3.8H5.2V4.7H4V6H3Z" fill="#fff"/></svg><div class="t" style="left:17.0px;top:2.0px;font-size:8.5px;color:#1a1a1a;transform:scaleX(0.718);transform-origin:0 0;">FS-A1F_open v1* (Team hub - g catsin) - Autodesk Fusion 個人用(商用利用不可)</div><div class="a" style="left:959px;top:5px;width:7px;height:1px;background:#333"></div><div class="a" style="left:983.5px;top:2.5px;width:5.5px;height:5.5px;border:1px solid #333;background:#fff"></div><div class="a" style="left:985px;top:1.2px;width:5.5px;height:5.5px;border-top:1px solid #333;border-right:1px solid #333"></div><svg class="a" style="left:1007px;top:1.5px" width="8" height="8" viewBox="0 0 8 8"><path d="M0.5 0.5L7.5 7.5M7.5 0.5L0.5 7.5" stroke="#222" stroke-width="1"/></svg><div class="a" style="left:4px;top:12px;width:1020px;height:17px;background:#d3d3d3"></div><div class="a" style="left:107px;top:14.5px;width:21px;height:14.5px;background:#bdbdbd"></div><div class="a" style="left:128px;top:14px;width:763px;height:15px;background:#f0f0f0"></div><div class="a" style="left:893px;top:14.5px;width:15px;height:14.5px;background:#bdbdbd"></div><svg class="a" style="left:896.5px;top:18px" width="8" height="8" viewBox="0 0 8 8"><path d="M4 0V8M0 4H8" stroke="#666" stroke-width="1.1"/></svg><svg class="a" style="left:882.5px;top:19.5px" width="5" height="5" viewBox="0 0 5 5"><path d="M0.3 0.3L4.7 4.7M4.7 0.3L0.3 4.7" stroke="#777" stroke-width="0.8"/></svg><svg class="a" style="left:476.5px;top:18px" width="8" height="8" viewBox="0 0 8 8"><path d="M4 0.3L7.6 2.2V6L4 7.8L0.4 6V2.2Z" fill="#f07b22"/><path d="M4 3.8L7.6 2.2M4 3.8V7.8M4 3.8L0.4 2.2" stroke="#c85a10" stroke-width="0.5"/></svg><div class="t" style="left:487.0px;top:18.5px;font-size:7.5px;color:#333;transform:scaleX(0.839);transform-origin:0 0;">FS-A1F_open v1*</div><div class="a" style="left:4px;top:29px;width:1020px;height:44px;background:#f1f1f1;border-bottom:1px solid #dedede"></div><div class="a" style="left:10.5px;top:35px;width:58px;height:32px;border:1px solid #d9d9d9;border-radius:3px;background:#f1f1f1"></div><div class="t" style="left:28.0px;top:48.0px;font-size:6.5px;color:#333;font-weight:bold;transform:scaleX(0.651);transform-origin:0 0;">デザイン ▾</div><div class="a" style="left:78px;top:39.8px;width:29.5px;height:1.6px;background:#1d91d6"></div><div class="t" style="left:84.0px;top:32.0px;font-size:6.5px;color:#1d91d6;-webkit-text-stroke:0.2px #1d91d6;transform:scaleX(0.607);transform-origin:0 0;">ソリッド</div><div class="t" style="left:125.0px;top:32.0px;font-size:6.5px;color:#555;-webkit-text-stroke:0.2px #555;transform:scaleX(0.600);transform-origin:0 0;">サーフェス</div><div class="t" style="left:169.0px;top:32.0px;font-size:6.5px;color:#555;-webkit-text-stroke:0.2px #555;transform:scaleX(0.607);transform-origin:0 0;">メッシュ</div><div class="t" style="left:210.0px;top:32.0px;font-size:6.5px;color:#555;-webkit-text-stroke:0.2px #555;transform:scaleX(0.625);transform-origin:0 0;">フォーム</div><div class="t" style="left:250.0px;top:32.0px;font-size:6.5px;color:#555;-webkit-text-stroke:0.2px #555;transform:scaleX(0.685);transform-origin:0 0;">シート メタル</div><div class="t" style="left:305.0px;top:32.0px;font-size:6.5px;color:#555;-webkit-text-stroke:0.2px #555;transform:scaleX(0.595);transform-origin:0 0;">プラスチック</div><div class="t" style="left:353.5px;top:32.0px;font-size:6.5px;color:#555;-webkit-text-stroke:0.2px #555;transform:scaleX(0.582);transform-origin:0 0;">ユーティリティ</div><div class="t" style="left:406.0px;top:32.0px;font-size:6.5px;color:#555;-webkit-text-stroke:0.2px #555;transform:scaleX(0.786);transform-origin:0 0;">管理</div><div class="t" style="left:122.0px;top:63.5px;font-size:6.5px;color:#505050;-webkit-text-stroke:0.1px #505050;transform:scaleX(0.808);transform-origin:0 0;">作成 ▾</div><div class="t" style="left:252.0px;top:63.5px;font-size:6.5px;color:#505050;-webkit-text-stroke:0.1px #505050;transform:scaleX(0.858);transform-origin:0 0;">修正 ▾</div><div class="t" style="left:356.6px;top:63.5px;font-size:6.5px;color:#505050;-webkit-text-stroke:0.1px #505050;transform:scaleX(0.649);transform-origin:0 0;">アセンブリ ▾</div><div class="t" style="left:415.5px;top:63.5px;font-size:6.5px;color:#505050;-webkit-text-stroke:0.1px #505050;transform:scaleX(0.601);transform-origin:0 0;">コンフィギュレーション ▾</div><div class="t" style="left:481.0px;top:63.5px;font-size:6.5px;color:#505050;-webkit-text-stroke:0.1px #505050;transform:scaleX(0.843);transform-origin:0 0;">構築 ▾</div><div class="t" style="left:512.7px;top:63.5px;font-size:6.5px;color:#505050;-webkit-text-stroke:0.1px #505050;transform:scaleX(0.823);transform-origin:0 0;">検査 ▾</div><div class="t" style="left:552.7px;top:63.5px;font-size:6.5px;color:#505050;-webkit-text-stroke:0.1px #505050;transform:scaleX(0.803);transform-origin:0 0;">挿入 ▾</div><div class="t" style="left:595.8px;top:63.5px;font-size:6.5px;color:#505050;-webkit-text-stroke:0.1px #505050;transform:scaleX(0.767);transform-origin:0 0;">選択 ▾</div><div class="a" style="left:190.5px;top:43px;width:1px;height:20px;background:#dadada"></div><div class="a" style="left:333.5px;top:43px;width:1px;height:20px;background:#dadada"></div><div class="a" style="left:408.0px;top:43px;width:1px;height:20px;background:#dadada"></div><div class="a" style="left:473.5px;top:43px;width:1px;height:20px;background:#dadada"></div><div class="a" style="left:505.0px;top:43px;width:1px;height:20px;background:#dadada"></div><div class="a" style="left:536.2px;top:43px;width:1px;height:20px;background:#dadada"></div><div class="a" style="left:587.6px;top:43px;width:1px;height:20px;background:#dadada"></div><svg class="a" style="left:77px;top:43.5px" width="18" height="18" viewBox="0 0 18 18"><rect x="1" y="1" width="13" height="13" fill="none" stroke="#555" stroke-width="0.9" stroke-dasharray="1.6 1"/><path d="M4 4V11M4 4H11M4 11Q10 10 11 4" fill="none" stroke="#555" stroke-width="0.8"/><path d="M11.5 10.5h2.2v2.7h2.7v2.2h-2.7v2.6h-2.2v-2.6H8.8v-2.2h2.7z" fill="#23a03a"/></svg><svg class="a" style="left:100px;top:43.5px" width="17" height="18" viewBox="0 0 17 18"><path d="M1 15L3 17H13L13 15Z" fill="#cfcfcf"/><path d="M1 4L4 1H13V14L11 16H1Z" fill="#8cc3ef"/><path d="M1 4H10V16H1Z" fill="#4d9de0"/><path d="M10 4L13 1V14L10 16Z" fill="#2f7fc6"/><rect x="14.6" y="1" width="1.2" height="15" fill="#444"/></svg><svg class="a" style="left:122px;top:44px" width="18" height="17" viewBox="0 0 18 17"><path d="M3.5 5Q9 1 14.5 4.5" fill="none" stroke="#444" stroke-width="1"/><path d="M1.8 3.8L3.2 7L5.2 4.6Z" fill="#444"/><path d="M1 10Q9 4 17 10V14.5Q9 10 1 16Z" fill="#4d9de0"/><path d="M1 10Q9 5.5 15.5 9.5" fill="none" stroke="#8cc3ef" stroke-width="1.4"/><path d="M14 9.8L17 9.5V14.5L14 15Z" fill="#fff" stroke="#666" stroke-width="0.6"/></svg><svg class="a" style="left:145px;top:43.5px" width="18" height="18" viewBox="0 0 18 18"><path d="M1 4L4 1H17V14L14 17H1Z" fill="#cfcfcf" stroke="#888" stroke-width="0.7"/><path d="M1 4H14V17" fill="none" stroke="#999" stroke-width="0.7"/><circle cx="7.5" cy="10.5" r="4.2" fill="#fff" stroke="#777" stroke-width="0.8"/><circle cx="7.5" cy="10.5" r="3.2" fill="#4d9de0"/><path d="M5 8.5Q7.5 6.5 10 8.5Q8 8.5 6.5 11Z" fill="#fff"/></svg><svg class="a" style="left:168px;top:44px" width="16" height="16" viewBox="0 0 16 16"><path d="M2.5 2.5H13.5M2.5 2.5V13.5H13.5" fill="none" stroke="#666" stroke-width="0.8"/><circle cx="2.5" cy="2.5" r="1.8" fill="#fff" stroke="#666" stroke-width="0.8"/><rect x="11.5" y="0.5" width="4" height="4" fill="#4d9de0"/><rect x="0.5" y="11.5" width="4" height="4" fill="#4d9de0"/><rect x="11.5" y="11.5" width="4" height="4" fill="#4d9de0"/></svg><svg class="a" style="left:196.5px;top:43px" width="18" height="18" viewBox="0 0 18 18"><path d="M3 1H9V17H3Q1 17 1 15V3Q1 1 3 1Z" fill="#e6e6e6" stroke="#888" stroke-width="0.7"/><rect x="4.5" y="1" width="5" height="16" fill="#4d9de0"/><path d="M9.5 1L11 2.5V16L9.5 17Z" fill="#2f7fc6"/><path d="M11 9H16M14.5 7.5L17 9L14.5 10.5Z" fill="#333" stroke="#333" stroke-width="0.8"/></svg><svg class="a" style="left:219px;top:43px" width="18" height="18" viewBox="0 0 18 18"><path d="M1 5L5 1H9A8 8 0 0 1 17 9V13L13 17H3L1 15Z" fill="#dcdcdc" stroke="#777" stroke-width="0.7"/><path d="M9 1A8 8 0 0 1 17 9L13.5 10A5 5 0 0 0 8.5 5Z" fill="#4d9de0"/></svg><svg class="a" style="left:242px;top:43px" width="18" height="18" viewBox="0 0 18 18"><path d="M1 4L4 1H17V14L14 17H1Z" fill="#dcdcdc" stroke="#777" stroke-width="0.7"/><path d="M1 4H14V17M14 4L17 1" fill="none" stroke="#888" stroke-width="0.7"/><path d="M3.5 7H6V13H12V15H3.5Z" fill="#2f7fc6"/><path d="M6 7L8 6V12H12L12 13H6Z" fill="#8cc3ef"/></svg><svg class="a" style="left:264.5px;top:43px" width="19" height="18" viewBox="0 0 19 18"><path d="M1 9L3 7H11V17H1Z" fill="#4d9de0"/><path d="M7 3L9 1H18V10L16 12H7Z" fill="#4d9de0"/><path d="M7 3H16V12" fill="none" stroke="#2f7fc6" stroke-width="0.6"/></svg><svg class="a" style="left:288px;top:43px" width="18" height="18" viewBox="0 0 18 18"><path d="M1 3L3 1H17V7H1Z" fill="#4d9de0"/><path d="M1 9H17" stroke="#4d9de0" stroke-width="1.2"/><path d="M1 11H17V15L15 17H1Z" fill="#dcdcdc" stroke="#888" stroke-width="0.6"/></svg><svg class="a" style="left:311px;top:43px" width="18" height="18" viewBox="0 0 18 18"><path d="M9 1L12 4.5H10V8H13.5V6L17 9L13.5 12V10H10V13.5H12L9 17L6 13.5H8V10H4.5V12L1 9L4.5 6V8H8V4.5H6Z" fill="#222"/></svg><svg class="a" style="left:339px;top:43.5px" width="18" height="17" viewBox="0 0 18 17"><path d="M1 10H8V17H1Z" fill="#d6d6d6" stroke="#999" stroke-width="0.6"/><path d="M8 10H15V17H8Z" fill="#e4e4e4" stroke="#999" stroke-width="0.6"/><path d="M1 4L3 2H8V10H1Z" fill="#4d9de0"/><circle cx="14" cy="4" r="2.5" fill="#f5a623"/><path d="M14 0V8M10 4H18M11 1L17 7M17 1L11 7" stroke="#f5a623" stroke-width="0.7"/></svg><svg class="a" style="left:362px;top:43.5px" width="17" height="17" viewBox="0 0 17 17"><path d="M1 5Q3 1 7 2V15Q3 16 1 13Z" fill="#cfcfcf" stroke="#777" stroke-width="0.7"/><path d="M10 2Q14 1 16 5V13Q14 16 10 15Z" fill="#d8d8d8" stroke="#777" stroke-width="0.7"/><path d="M7 8L10 7L9 10Z" fill="#4d9de0"/></svg><svg class="a" style="left:384.5px;top:43.5px" width="19" height="17" viewBox="0 0 19 17"><rect x="0.5" y="0.5" width="4" height="4" fill="#4d9de0"/><rect x="0.5" y="5" width="4" height="4" fill="#fff" stroke="#4d9de0" stroke-width="0.6"/><rect x="6" y="4" width="12" height="12.5" fill="#fff" stroke="#555" stroke-width="0.8"/><path d="M6 7H18M6 10H18M6 13H18M10 4V16.5M14 4V16.5" stroke="#888" stroke-width="0.6"/><rect x="6" y="4" width="12" height="2" fill="#555"/></svg><svg class="a" style="left:421px;top:43.5px" width="18" height="18" viewBox="0 0 18 18"><rect x="1" y="3" width="12" height="13" rx="1" fill="#ececec" stroke="#dedede" stroke-width="0.7"/><circle cx="12" cy="5" r="4" fill="#a9d2f0"/><path d="M12 2.5V7M10.5 4L12 2.5L13.5 4" stroke="#fff" stroke-width="0.8" fill="none"/><path d="M12 10V16M9 13H15" stroke="#cfcfcf" stroke-width="0.7"/></svg><svg class="a" style="left:443.5px;top:43.5px" width="18" height="18" viewBox="0 0 18 18"><rect x="1" y="3" width="12" height="13" rx="1" fill="#ececec" stroke="#dedede" stroke-width="0.7"/><circle cx="12" cy="5" r="4" fill="#a9d2f0"/><path d="M12 2.5V7M10.5 4L12 2.5L13.5 4" stroke="#fff" stroke-width="0.8" fill="none"/><path d="M12 10V16M9 13H15" stroke="#cfcfcf" stroke-width="0.7"/></svg><svg class="a" style="left:481px;top:43.5px" width="18" height="18" viewBox="0 0 18 18"><path d="M1 5L5 2V15L1 17Z" fill="#e8e8e8" stroke="#777" stroke-width="0.6"/><path d="M5 2L9 1V14L5 15Z" fill="#3aa655"/><path d="M13 6L17 3V14L13 17Z" fill="#e8925a"/></svg><svg class="a" style="left:512.5px;top:47px" width="17" height="10" viewBox="0 0 17 10"><rect x="0.5" y="2" width="16" height="4" fill="#fff" stroke="#aaa" stroke-width="0.6"/><path d="M1 4H16" stroke="#777" stroke-width="0.6"/><rect x="0.5" y="6.5" width="16" height="3" fill="#f0a000"/></svg><svg class="a" style="left:542.5px;top:43.5px" width="18" height="18" viewBox="0 0 18 18"><path d="M2 6L4 4H14V15L12 17H2Z" fill="#dcdcdc" stroke="#888" stroke-width="0.7"/><path d="M0.5 4.5H6M4.5 2L7.5 4.5L4.5 7Z" stroke="#2f7fc6" fill="#2f7fc6" stroke-width="1.4"/><path d="M9 14L12 11M11 16L15 12" stroke="#222" stroke-width="1.6"/><ellipse cx="11" cy="14" rx="3.5" ry="2" transform="rotate(-45 11 14)" fill="none" stroke="#222" stroke-width="1.1"/><ellipse cx="14" cy="11.5" rx="3.5" ry="2" transform="rotate(-45 14 11.5)" fill="none" stroke="#222" stroke-width="1.1"/></svg><svg class="a" style="left:566px;top:43.5px" width="16" height="16" viewBox="0 0 16 16"><rect x="0" y="0" width="16" height="16" fill="#7cc0ef"/><path d="M0 12L5 6L9 10L12 8L16 12V16H0Z" fill="#3d8fd0"/><circle cx="12" cy="4" r="1.6" fill="#fff6c0"/></svg><svg class="a" style="left:593.5px;top:41.5px" width="21" height="21" viewBox="0 0 21 21"><rect width="21" height="21" fill="#1a93d6"/><rect x="3" y="3" width="12" height="11" fill="none" stroke="#9adf6a" stroke-width="1" stroke-dasharray="1.5 1.2"/><path d="M12 9.5L12 18.5L14 16.5L15.5 19.5L17 18.8L15.6 15.8L18 15.6Z" fill="#fff"/></svg><svg class="a" style="left:9px;top:17px" width="8" height="8" viewBox="0 0 8 8"><rect x="0" y="0" width="2" height="2" fill="#555"/><rect x="0" y="2.6" width="2" height="2" fill="#555"/><rect x="0" y="5.2" width="2" height="2" fill="#555"/><rect x="2.6" y="0" width="2" height="2" fill="#555"/><rect x="2.6" y="2.6" width="2" height="2" fill="#555"/><rect x="2.6" y="5.2" width="2" height="2" fill="#555"/><rect x="5.2" y="0" width="2" height="2" fill="#555"/><rect x="5.2" y="2.6" width="2" height="2" fill="#555"/><rect x="5.2" y="5.2" width="2" height="2" fill="#555"/></svg><svg class="a" style="left:26px;top:16.5px" width="8" height="9" viewBox="0 0 8 9"><path d="M0 0H5L7.5 2.5V9H0Z" fill="#5c5c5c"/></svg><svg class="a" style="left:37.5px;top:20px" width="4" height="3" viewBox="0 0 4 3"><path d="M0 0H4L2 3Z" fill="#555"/></svg><svg class="a" style="left:50px;top:16.5px" width="8" height="8" viewBox="0 0 8 8"><rect x="0" y="0" width="8" height="8" rx="0.6" fill="#5c5c5c"/><rect x="1.6" y="0.8" width="4.6" height="2.4" fill="#d0d0d0"/><rect x="1.6" y="4.6" width="4.8" height="3" fill="#9a9a9a"/></svg><svg class="a" style="left:67px;top:16.5px" width="9" height="8" viewBox="0 0 9 8"><path d="M1 3.5H5.5Q8.5 3.5 8.5 6.5V8" fill="none" stroke="#5a5a5a" stroke-width="1.3"/><path d="M0 3.5L3.2 0.5V6.5Z" fill="#5a5a5a"/></svg><svg class="a" style="left:79px;top:20px" width="4" height="3" viewBox="0 0 4 3"><path d="M0 0H4L2 3Z" fill="#555"/></svg><svg class="a" style="left:88px;top:16.5px" width="9" height="8" viewBox="0 0 9 8"><path d="M8 3.5H3.5Q0.5 3.5 0.5 6.5V8" fill="none" stroke="#a5a5a5" stroke-width="1.3"/><path d="M9 3.5L5.8 0.5V6.5Z" fill="#a5a5a5"/></svg><svg class="a" style="left:100px;top:20px" width="4" height="3" viewBox="0 0 4 3"><path d="M0 0H4L2 3Z" fill="#a0a0a0"/></svg><svg class="a" style="left:113px;top:18px" width="9" height="8" viewBox="0 0 9 8"><path d="M0.5 4L4.5 0.5L8.5 4V8H0.5Z" fill="#8a8a8a"/></svg><svg class="a" style="left:914.5px;top:16px" width="9" height="9" viewBox="0 0 9 9"><circle cx="4.5" cy="4.5" r="4.5" fill="#1b8fe0"/><path d="M4.5 1.5L7 4.2H5.5V7.5H3.5V4.2H2Z" fill="#fff"/></svg><svg class="a" style="left:931.5px;top:16px" width="9" height="9" viewBox="0 0 9 9"><circle cx="4.5" cy="4.5" r="4" fill="none" stroke="#555" stroke-width="1.1"/><path d="M4.5 1.5A3 3 0 0 1 7.5 4.5H4.5Z" fill="#555"/><circle cx="4.5" cy="4.5" r="1.3" fill="#555"/></svg><svg class="a" style="left:949px;top:16px" width="9" height="9" viewBox="0 0 9 9"><circle cx="4.5" cy="4.5" r="4.2" fill="#888"/><path d="M4.5 2V4.8L6.5 5.5" fill="none" stroke="#e0e0e0" stroke-width="0.9"/></svg><svg class="a" style="left:967px;top:15.5px" width="9" height="10" viewBox="0 0 9 10"><path d="M4.5 1.5Q7.5 1.5 7.5 5V7.5L8.5 8.5H0.5L1.5 7.5V5Q1.5 1.5 4.5 1.5Z" fill="#555"/><circle cx="4.5" cy="9.3" r="1" fill="#555"/><circle cx="7" cy="2" r="1.6" fill="#1b8fe0"/></svg><svg class="a" style="left:984.5px;top:16px" width="9" height="9" viewBox="0 0 9 9"><circle cx="4.5" cy="4.5" r="4.3" fill="#555"/><path d="M3 3.5Q3 2 4.5 2Q6 2 6 3.4Q6 4.4 4.6 5V6" fill="none" stroke="#fff" stroke-width="0.9"/><circle cx="4.6" cy="7.2" r="0.55" fill="#fff"/></svg><svg class="a" style="left:1004px;top:14px" width="13" height="13" viewBox="0 0 13 13"><circle cx="6.5" cy="6.5" r="6.3" fill="#b9c3d1"/><circle cx="6.5" cy="5" r="2.6" fill="#4a5568"/><path d="M1.8 11Q6.5 6.5 11.2 11Q6.5 14 1.8 11Z" fill="#4a5568"/></svg><div class="a" style="left:6px;top:76px;width:160px;height:13.5px;background:#efefef;border:1px solid #e2e2e2;border-radius:1px"></div><svg class="a" style="left:9px;top:80.5px" width="6" height="5" viewBox="0 0 6 5"><path d="M0 2.5L3 0V5ZM3 2.5L6 0V5Z" fill="#222"/></svg><div class="t" style="left:19.5px;top:79.5px;font-size:6.5px;color:#777;transform:scaleX(0.625);transform-origin:0 0;">ブラウザ</div><div class="a" style="left:154px;top:79.8px;width:6.5px;height:6.5px;border-radius:50%;background:#222"></div><div class="a" style="left:156.2px;top:82px;width:2.1px;height:2.1px;border-radius:50%;background:#eee"></div><div class="a" style="left:8.5px;top:92.5px;width:3px;height:495px;background:#c8c8c8"></div><svg class="a" style="left:15.0px;top:94.2px" width="7" height="7" viewBox="0 0 7 7"><path d="M6.3 0.5V6.3H0.5Z" fill="#555" stroke="#333" stroke-width="0.8"/><path d="M5.2 2.8V5.3H2.6Z" fill="#ccc"/></svg><div class="a" style="left:25.0px;top:92.5px;width:96.0px;height:10.4px;background:rgba(236,236,236,0.92);border-radius:1px"></div><svg class="a" style="left:27.0px;top:94.2px" width="10" height="7" viewBox="0 0 10 7"><path d="M0.6 3.5 Q5 -0.8 9.4 3.5 Q5 7.8 0.6 3.5Z" fill="none" stroke="#8c8c8c" stroke-width="1"/><circle cx="5" cy="3.5" r="1.6" fill="#8c8c8c"/></svg><div class="a" style="left:39px;top:92.5px;width:69px;height:10.4px;background:#8f8f8f"></div><div class="a" style="left:41px;top:93.7px;width:7px;height:8px;background:#e9e9e9;border-radius:1px"></div><div class="t" style="left:56.0px;top:94.4px;font-size:6.5px;color:#fff;font-weight:bold;transform:scaleX(0.903);transform-origin:0 0;">FS-A1F_open v1</div><div class="a" style="left:109.5px;top:94.0px;width:7.5px;height:7.5px;border:1px solid #333;border-radius:50%;background:#fff"></div><div class="a" style="left:112.2px;top:96.6px;width:2.2px;height:2.2px;border-radius:50%;background:#222"></div><svg class="a" style="left:25.0px;top:106.5px" width="7" height="8" viewBox="0 0 7 8"><path d="M0.8 0.8L6 4L0.8 7.2Z" fill="#fff" stroke="#333" stroke-width="1.1" stroke-linejoin="round"/></svg><div class="a" style="left:35.0px;top:105.2px;width:63.0px;height:10.4px;background:rgba(236,236,236,0.92);border-radius:1px"></div><svg class="a" style="left:37.0px;top:106.0px" width="9" height="9" viewBox="0 0 9 9"><polygon points="8.70,4.50 7.27,5.65 7.47,7.47 5.65,7.27 4.50,8.70 3.35,7.27 1.53,7.47 1.73,5.65 0.30,4.50 1.73,3.35 1.53,1.53 3.35,1.73 4.50,0.30 5.65,1.73 7.47,1.53 7.27,3.35" fill="#666"/><circle cx="4.5" cy="4.5" r="1.4" fill="#eee"/></svg><div class="t" style="left:50.0px;top:107.2px;font-size:6.5px;color:#262626;-webkit-text-stroke:0.2px #262626;transform:scaleX(0.667);transform-origin:0 0;">ドキュメントの設定</div><svg class="a" style="left:25.0px;top:119.2px" width="7" height="8" viewBox="0 0 7 8"><path d="M0.8 0.8L6 4L0.8 7.2Z" fill="#fff" stroke="#333" stroke-width="1.1" stroke-linejoin="round"/></svg><div class="a" style="left:35.0px;top:118.0px;width:67.0px;height:10.4px;background:rgba(236,236,236,0.92);border-radius:1px"></div><svg class="a" style="left:37.0px;top:119.2px" width="9" height="8" viewBox="0 0 9 8"><path d="M0 0.5H3.5L4.5 1.5H9V8H0Z" fill="#8e8e8e"/></svg><div class="t" style="left:53.0px;top:119.9px;font-size:6.5px;color:#262626;-webkit-text-stroke:0.2px #262626;transform:scaleX(0.683);transform-origin:0 0;">名前の付いたビュー</div><svg class="a" style="left:25.0px;top:131.9px" width="7" height="8" viewBox="0 0 7 8"><path d="M0.8 0.8L6 4L0.8 7.2Z" fill="#fff" stroke="#333" stroke-width="1.1" stroke-linejoin="round"/></svg><div class="a" style="left:35.0px;top:130.8px;width:47.0px;height:10.4px;background:rgba(236,236,236,0.92);border-radius:1px"></div><svg class="a" style="left:36.5px;top:132.4px" width="10" height="7" viewBox="0 0 10 7"><path d="M0.6 3.5 Q5 -0.8 9.4 3.5 Q5 7.8 0.6 3.5Z" fill="none" stroke="#c8c8c8" stroke-width="1"/><circle cx="5" cy="3.5" r="1.6" fill="#c8c8c8"/></svg><svg class="a" style="left:50.0px;top:131.9px" width="9" height="8" viewBox="0 0 9 8"><path d="M0 0.5H3.5L4.5 1.5H9V8H0Z" fill="#8e8e8e"/></svg><div class="t" style="left:65.5px;top:132.6px;font-size:6.5px;color:#262626;-webkit-text-stroke:0.2px #262626;transform:scaleX(0.679);transform-origin:0 0;">原点</div><svg class="a" style="left:25.0px;top:145.2px" width="7" height="7" viewBox="0 0 7 7"><path d="M6.3 0.5V6.3H0.5Z" fill="#555" stroke="#333" stroke-width="0.8"/><path d="M5.2 2.8V5.3H2.6Z" fill="#ccc"/></svg><div class="a" style="left:35.0px;top:143.5px;width:50.0px;height:10.4px;background:rgba(236,236,236,0.92);border-radius:1px"></div><svg class="a" style="left:36.5px;top:145.2px" width="10" height="7" viewBox="0 0 10 7"><path d="M0.6 3.5 Q5 -0.8 9.4 3.5 Q5 7.8 0.6 3.5Z" fill="none" stroke="#8c8c8c" stroke-width="1"/><circle cx="5" cy="3.5" r="1.6" fill="#8c8c8c"/></svg><svg class="a" style="left:50.0px;top:144.7px" width="9" height="8" viewBox="0 0 9 8"><path d="M0 0.5H3.5L4.5 1.5H9V8H0Z" fill="#8e8e8e"/></svg><div class="t" style="left:65.5px;top:145.4px;font-size:6.5px;color:#262626;-webkit-text-stroke:0.2px #262626;transform:scaleX(0.631);transform-origin:0 0;">ボディ</div><svg class="a" style="left:35.0px;top:157.4px" width="7" height="8" viewBox="0 0 7 8"><path d="M0.8 0.8L6 4L0.8 7.2Z" fill="#fff" stroke="#333" stroke-width="1.1" stroke-linejoin="round"/></svg><div class="a" style="left:44.4px;top:156.2px;width:65.6px;height:10.4px;background:rgba(236,236,236,0.92);border-radius:1px"></div><svg class="a" style="left:46.0px;top:157.9px" width="10" height="7" viewBox="0 0 10 7"><path d="M0.6 3.5 Q5 -0.8 9.4 3.5 Q5 7.8 0.6 3.5Z" fill="none" stroke="#c8c8c8" stroke-width="1"/><circle cx="5" cy="3.5" r="1.6" fill="#c8c8c8"/></svg><svg class="a" style="left:59.7px;top:157.4px" width="9" height="8" viewBox="0 0 9 8"><path d="M0 0.5H3.5L4.5 1.5H9V8H0Z" fill="#8e8e8e"/></svg><div class="t" style="left:75.3px;top:158.1px;font-size:6.5px;color:#262626;-webkit-text-stroke:0.2px #262626;transform:scaleX(0.725);transform-origin:0 0;">グループ1 (9)</div><div class="a" style="left:44.4px;top:169.0px;width:88.4px;height:10.4px;background:rgba(236,236,236,0.92);border-radius:1px"></div><svg class="a" style="left:46.0px;top:170.7px" width="10" height="7" viewBox="0 0 10 7"><path d="M0.6 3.5 Q5 -0.8 9.4 3.5 Q5 7.8 0.6 3.5Z" fill="none" stroke="#8c8c8c" stroke-width="1"/><circle cx="5" cy="3.5" r="1.6" fill="#8c8c8c"/></svg><svg class="a" style="left:59.2px;top:169.7px" width="9" height="9" viewBox="0 0 9 9"><rect x="0.6" y="0.6" width="7.8" height="7.8" rx="1.5" fill="#fafafa" stroke="#6d7382" stroke-width="1"/><rect x="3" y="3.2" width="3" height="3.2" fill="#c7ccd4"/></svg><div class="t" style="left:75.1px;top:170.9px;font-size:6.5px;color:#262626;-webkit-text-stroke:0.2px #262626;transform:scaleX(0.816);transform-origin:0 0;">ボディ上面 (1) (2) (1)</div><div class="a" style="left:44.4px;top:181.8px;width:97.4px;height:10.4px;background:rgba(236,236,236,0.92);border-radius:1px"></div><svg class="a" style="left:46.0px;top:183.4px" width="10" height="7" viewBox="0 0 10 7"><path d="M0.6 3.5 Q5 -0.8 9.4 3.5 Q5 7.8 0.6 3.5Z" fill="none" stroke="#8c8c8c" stroke-width="1"/><circle cx="5" cy="3.5" r="1.6" fill="#8c8c8c"/></svg><svg class="a" style="left:59.2px;top:182.4px" width="9" height="9" viewBox="0 0 9 9"><rect x="0.6" y="0.6" width="7.8" height="7.8" rx="1.5" fill="#fafafa" stroke="#6d7382" stroke-width="1"/><rect x="3" y="3.2" width="3" height="3.2" fill="#c7ccd4"/></svg><div class="t" style="left:75.1px;top:183.6px;font-size:6.5px;color:#262626;-webkit-text-stroke:0.2px #262626;transform:scaleX(0.830);transform-origin:0 0;">ボディ下面 (1) (1) (1) (2)</div><div class="a" style="left:44.4px;top:194.5px;width:65.4px;height:10.4px;background:rgba(236,236,236,0.92);border-radius:1px"></div><svg class="a" style="left:46.0px;top:196.2px" width="10" height="7" viewBox="0 0 10 7"><path d="M0.6 3.5 Q5 -0.8 9.4 3.5 Q5 7.8 0.6 3.5Z" fill="none" stroke="#8c8c8c" stroke-width="1"/><circle cx="5" cy="3.5" r="1.6" fill="#8c8c8c"/></svg><svg class="a" style="left:59.2px;top:195.2px" width="9" height="9" viewBox="0 0 9 9"><rect x="0.6" y="0.6" width="7.8" height="7.8" rx="1.5" fill="#fafafa" stroke="#6d7382" stroke-width="1"/><rect x="3" y="3.2" width="3" height="3.2" fill="#c7ccd4"/></svg><div class="t" style="left:75.1px;top:196.4px;font-size:6.5px;color:#262626;-webkit-text-stroke:0.2px #262626;transform:scaleX(0.739);transform-origin:0 0;">FDDパネル 1</div><div class="a" style="left:44.4px;top:207.2px;width:80.2px;height:10.4px;background:rgba(236,236,236,0.92);border-radius:1px"></div><svg class="a" style="left:46.0px;top:208.9px" width="10" height="7" viewBox="0 0 10 7"><path d="M0.6 3.5 Q5 -0.8 9.4 3.5 Q5 7.8 0.6 3.5Z" fill="none" stroke="#8c8c8c" stroke-width="1"/><circle cx="5" cy="3.5" r="1.6" fill="#8c8c8c"/></svg><svg class="a" style="left:59.2px;top:207.9px" width="9" height="9" viewBox="0 0 9 9"><rect x="0.6" y="0.6" width="7.8" height="7.8" rx="1.5" fill="#fafafa" stroke="#6d7382" stroke-width="1"/><rect x="3" y="3.2" width="3" height="3.2" fill="#c7ccd4"/></svg><div class="t" style="left:75.1px;top:209.1px;font-size:6.5px;color:#262626;-webkit-text-stroke:0.2px #262626;transform:scaleX(0.759);transform-origin:0 0;">FDDパネル 1 - LED</div><div class="a" style="left:44.4px;top:220.0px;width:76.3px;height:10.4px;background:rgba(236,236,236,0.92);border-radius:1px"></div><svg class="a" style="left:46.0px;top:221.7px" width="10" height="7" viewBox="0 0 10 7"><path d="M0.6 3.5 Q5 -0.8 9.4 3.5 Q5 7.8 0.6 3.5Z" fill="none" stroke="#8c8c8c" stroke-width="1"/><circle cx="5" cy="3.5" r="1.6" fill="#8c8c8c"/></svg><svg class="a" style="left:59.2px;top:220.7px" width="9" height="9" viewBox="0 0 9 9"><rect x="0.6" y="0.6" width="7.8" height="7.8" rx="1.5" fill="#fafafa" stroke="#6d7382" stroke-width="1"/><rect x="3" y="3.2" width="3" height="3.2" fill="#c7ccd4"/></svg><div class="t" style="left:75.1px;top:221.9px;font-size:6.5px;color:#262626;-webkit-text-stroke:0.2px #262626;transform:scaleX(0.814);transform-origin:0 0;">FDDパネル 1  (1)</div><div class="a" style="left:44.4px;top:232.8px;width:77.0px;height:10.4px;background:rgba(236,236,236,0.92);border-radius:1px"></div><svg class="a" style="left:46.0px;top:234.4px" width="10" height="7" viewBox="0 0 10 7"><path d="M0.6 3.5 Q5 -0.8 9.4 3.5 Q5 7.8 0.6 3.5Z" fill="none" stroke="#8c8c8c" stroke-width="1"/><circle cx="5" cy="3.5" r="1.6" fill="#8c8c8c"/></svg><svg class="a" style="left:59.2px;top:233.4px" width="9" height="9" viewBox="0 0 9 9"><rect x="0.6" y="0.6" width="7.8" height="7.8" rx="1.5" fill="#fafafa" stroke="#6d7382" stroke-width="1"/><rect x="3" y="3.2" width="3" height="3.2" fill="#c7ccd4"/></svg><div class="t" style="left:75.1px;top:234.6px;font-size:6.5px;color:#262626;-webkit-text-stroke:0.2px #262626;transform:scaleX(0.752);transform-origin:0 0;">スロット蓋 (1) (1)</div><div class="a" style="left:44.4px;top:245.5px;width:118.3px;height:10.4px;background:rgba(236,236,236,0.92);border-radius:1px"></div><svg class="a" style="left:46.0px;top:247.2px" width="10" height="7" viewBox="0 0 10 7"><path d="M0.6 3.5 Q5 -0.8 9.4 3.5 Q5 7.8 0.6 3.5Z" fill="none" stroke="#8c8c8c" stroke-width="1"/><circle cx="5" cy="3.5" r="1.6" fill="#8c8c8c"/></svg><svg class="a" style="left:59.2px;top:246.2px" width="9" height="9" viewBox="0 0 9 9"><rect x="0.6" y="0.6" width="7.8" height="7.8" rx="1.5" fill="#fafafa" stroke="#6d7382" stroke-width="1"/><rect x="3" y="3.2" width="3" height="3.2" fill="#c7ccd4"/></svg><div class="t" style="left:75.1px;top:247.4px;font-size:6.5px;color:#262626;-webkit-text-stroke:0.2px #262626;transform:scaleX(0.709);transform-origin:0 0;">ジョイスティックポート (1) (1) (1) (1)</div><div class="a" style="left:44.4px;top:258.2px;width:119.5px;height:10.4px;background:rgba(236,236,236,0.92);border-radius:1px"></div><svg class="a" style="left:46.0px;top:259.9px" width="10" height="7" viewBox="0 0 10 7"><path d="M0.6 3.5 Q5 -0.8 9.4 3.5 Q5 7.8 0.6 3.5Z" fill="none" stroke="#8c8c8c" stroke-width="1"/><circle cx="5" cy="3.5" r="1.6" fill="#8c8c8c"/></svg><svg class="a" style="left:59.2px;top:258.9px" width="9" height="9" viewBox="0 0 9 9"><rect x="0.6" y="0.6" width="7.8" height="7.8" rx="1.5" fill="#fafafa" stroke="#6d7382" stroke-width="1"/><rect x="3" y="3.2" width="3" height="3.2" fill="#c7ccd4"/></svg><div class="t" style="left:75.1px;top:260.1px;font-size:6.5px;color:#262626;-webkit-text-stroke:0.2px #262626;transform:scaleX(0.700);transform-origin:0 0;">ジョイスティックポート (1) (1) (1) (1...</div><div class="a" style="left:44.4px;top:271.0px;width:84.1px;height:10.4px;background:rgba(236,236,236,0.92);border-radius:1px"></div><svg class="a" style="left:46.0px;top:272.7px" width="10" height="7" viewBox="0 0 10 7"><path d="M0.6 3.5 Q5 -0.8 9.4 3.5 Q5 7.8 0.6 3.5Z" fill="none" stroke="#8c8c8c" stroke-width="1"/><circle cx="5" cy="3.5" r="1.6" fill="#8c8c8c"/></svg><svg class="a" style="left:59.2px;top:271.7px" width="9" height="9" viewBox="0 0 9 9"><rect x="0.6" y="0.6" width="7.8" height="7.8" rx="1.5" fill="#fafafa" stroke="#6d7382" stroke-width="1"/><rect x="3" y="3.2" width="3" height="3.2" fill="#c7ccd4"/></svg><div class="t" style="left:75.1px;top:272.9px;font-size:6.5px;color:#262626;-webkit-text-stroke:0.2px #262626;transform:scaleX(0.749);transform-origin:0 0;">キーボード (1) (1) (1)</div><div class="a" style="left:44.4px;top:283.8px;width:59.3px;height:10.4px;background:rgba(236,236,236,0.92);border-radius:1px"></div><svg class="a" style="left:46.0px;top:285.4px" width="10" height="7" viewBox="0 0 10 7"><path d="M0.6 3.5 Q5 -0.8 9.4 3.5 Q5 7.8 0.6 3.5Z" fill="none" stroke="#8c8c8c" stroke-width="1"/><circle cx="5" cy="3.5" r="1.6" fill="#8c8c8c"/></svg><svg class="a" style="left:59.2px;top:284.4px" width="9" height="9" viewBox="0 0 9 9"><rect x="0.6" y="0.6" width="7.8" height="7.8" rx="1.5" fill="#fafafa" stroke="#6d7382" stroke-width="1"/><rect x="3" y="3.2" width="3" height="3.2" fill="#c7ccd4"/></svg><div class="t" style="left:75.1px;top:285.6px;font-size:6.5px;color:#262626;-webkit-text-stroke:0.2px #262626;transform:scaleX(0.731);transform-origin:0 0;">ボディ430</div><div class="a" style="left:44.4px;top:296.5px;width:87.9px;height:10.4px;background:rgba(236,236,236,0.92);border-radius:1px"></div><svg class="a" style="left:46.0px;top:298.2px" width="10" height="7" viewBox="0 0 10 7"><path d="M0.6 3.5 Q5 -0.8 9.4 3.5 Q5 7.8 0.6 3.5Z" fill="none" stroke="#8c8c8c" stroke-width="1"/><circle cx="5" cy="3.5" r="1.6" fill="#8c8c8c"/></svg><svg class="a" style="left:59.2px;top:297.2px" width="9" height="9" viewBox="0 0 9 9"><rect x="0.6" y="0.6" width="7.8" height="7.8" rx="1.5" fill="#fafafa" stroke="#6d7382" stroke-width="1"/><rect x="3" y="3.2" width="3" height="3.2" fill="#c7ccd4"/></svg><div class="t" style="left:75.1px;top:298.4px;font-size:6.5px;color:#262626;-webkit-text-stroke:0.2px #262626;transform:scaleX(0.687);transform-origin:0 0;">スロットフレーム (1) (1)</div><div class="a" style="left:44.4px;top:309.2px;width:72.0px;height:10.4px;background:rgba(236,236,236,0.92);border-radius:1px"></div><svg class="a" style="left:46.0px;top:310.9px" width="10" height="7" viewBox="0 0 10 7"><path d="M0.6 3.5 Q5 -0.8 9.4 3.5 Q5 7.8 0.6 3.5Z" fill="none" stroke="#8c8c8c" stroke-width="1"/><circle cx="5" cy="3.5" r="1.6" fill="#8c8c8c"/></svg><svg class="a" style="left:59.2px;top:309.9px" width="9" height="9" viewBox="0 0 9 9"><rect x="0.6" y="0.6" width="7.8" height="7.8" rx="1.5" fill="#fafafa" stroke="#6d7382" stroke-width="1"/><rect x="3" y="3.2" width="3" height="3.2" fill="#c7ccd4"/></svg><div class="t" style="left:75.1px;top:311.1px;font-size:6.5px;color:#262626;-webkit-text-stroke:0.2px #262626;transform:scaleX(0.758);transform-origin:0 0;">スペーサ (1) (1)</div><div class="a" style="left:44.4px;top:322.0px;width:62.5px;height:10.4px;background:rgba(236,236,236,0.92);border-radius:1px"></div><svg class="a" style="left:46.0px;top:323.7px" width="10" height="7" viewBox="0 0 10 7"><path d="M0.6 3.5 Q5 -0.8 9.4 3.5 Q5 7.8 0.6 3.5Z" fill="none" stroke="#8c8c8c" stroke-width="1"/><circle cx="5" cy="3.5" r="1.6" fill="#8c8c8c"/></svg><svg class="a" style="left:59.2px;top:322.7px" width="9" height="9" viewBox="0 0 9 9"><rect x="0.6" y="0.6" width="7.8" height="7.8" rx="1.5" fill="#fafafa" stroke="#6d7382" stroke-width="1"/><rect x="3" y="3.2" width="3" height="3.2" fill="#c7ccd4"/></svg><div class="t" style="left:75.1px;top:323.9px;font-size:6.5px;color:#262626;-webkit-text-stroke:0.2px #262626;transform:scaleX(0.757);transform-origin:0 0;">透明パネル</div><svg class="a" style="left:25.0px;top:335.9px" width="7" height="8" viewBox="0 0 7 8"><path d="M0.8 0.8L6 4L0.8 7.2Z" fill="#fff" stroke="#333" stroke-width="1.1" stroke-linejoin="round"/></svg><div class="a" style="left:35.2px;top:334.8px;width:58.7px;height:10.4px;background:rgba(236,236,236,0.92);border-radius:1px"></div><svg class="a" style="left:36.5px;top:336.4px" width="10" height="7" viewBox="0 0 10 7"><path d="M0.6 3.5 Q5 -0.8 9.4 3.5 Q5 7.8 0.6 3.5Z" fill="none" stroke="#8c8c8c" stroke-width="1"/><circle cx="5" cy="3.5" r="1.6" fill="#8c8c8c"/></svg><svg class="a" style="left:50.0px;top:335.9px" width="9" height="8" viewBox="0 0 9 8"><path d="M0 0.5H3.5L4.5 1.5H9V8H0Z" fill="#8e8e8e"/></svg><div class="t" style="left:65.7px;top:336.6px;font-size:6.5px;color:#262626;-webkit-text-stroke:0.2px #262626;transform:scaleX(0.637);transform-origin:0 0;">キャンバス</div><svg class="a" style="left:25.0px;top:348.7px" width="7" height="8" viewBox="0 0 7 8"><path d="M0.8 0.8L6 4L0.8 7.2Z" fill="#fff" stroke="#333" stroke-width="1.1" stroke-linejoin="round"/></svg><div class="a" style="left:35.2px;top:347.5px;width:73.5px;height:10.4px;background:rgba(236,236,236,0.92);border-radius:1px"></div><svg class="a" style="left:36.5px;top:349.2px" width="10" height="7" viewBox="0 0 10 7"><path d="M0.6 3.5 Q5 -0.8 9.4 3.5 Q5 7.8 0.6 3.5Z" fill="none" stroke="#8c8c8c" stroke-width="1"/><circle cx="5" cy="3.5" r="1.6" fill="#8c8c8c"/></svg><svg class="a" style="left:50.0px;top:348.7px" width="9" height="8" viewBox="0 0 9 8"><path d="M0 0.5H3.5L4.5 1.5H9V8H0Z" fill="#8e8e8e"/></svg><div class="t" style="left:65.7px;top:349.4px;font-size:6.5px;color:#262626;-webkit-text-stroke:0.2px #262626;transform:scaleX(0.600);transform-origin:0 0;">コンストラクション</div><div class="a" style="left:35.2px;top:360.2px;width:51.9px;height:10.4px;background:rgba(236,236,236,0.92);border-radius:1px"></div><svg class="a" style="left:36.5px;top:360.9px" width="9" height="9" viewBox="0 0 9 9"><path d="M0.5 2L2 0.5H6.5V7.5L5 9H0.5Z" fill="#3d8fdc"/><path d="M0.5 2H5V9" fill="none" stroke="#2b6fb5" stroke-width="0.6"/><rect x="7.6" y="1" width="1" height="7" fill="#333"/></svg><div class="t" style="left:52.4px;top:362.1px;font-size:6.5px;color:#262626;-webkit-text-stroke:0.2px #262626;transform:scaleX(0.772);transform-origin:0 0;">押し出し102</div><div class="a" style="left:35.2px;top:373.0px;width:43.2px;height:10.4px;background:rgba(236,236,236,0.92);border-radius:1px"></div><svg class="a" style="left:36.5px;top:373.7px" width="9" height="9" viewBox="0 0 9 9"><path d="M1 8.4L2.2 1.2L6.5 1.2L8.4 8.4Z" fill="#d6d6d6" stroke="#555" stroke-width="0.8"/><path d="M4.5 2.2L8 4.2L6 8Z" fill="#3b8ed8"/></svg><div class="t" style="left:52.4px;top:374.9px;font-size:6.5px;color:#262626;-webkit-text-stroke:0.2px #262626;transform:scaleX(0.857);transform-origin:0 0;">勾配106</div><div class="a" style="left:35.2px;top:385.8px;width:51.9px;height:10.4px;background:rgba(236,236,236,0.92);border-radius:1px"></div><svg class="a" style="left:36.5px;top:386.4px" width="9" height="9" viewBox="0 0 9 9"><path d="M0.5 2L2 0.5H6.5V7.5L5 9H0.5Z" fill="#3d8fdc"/><path d="M0.5 2H5V9" fill="none" stroke="#2b6fb5" stroke-width="0.6"/><rect x="7.6" y="1" width="1" height="7" fill="#333"/></svg><div class="t" style="left:52.4px;top:387.6px;font-size:6.5px;color:#262626;-webkit-text-stroke:0.2px #262626;transform:scaleX(0.772);transform-origin:0 0;">押し出し149</div><div class="a" style="left:35.2px;top:398.5px;width:43.2px;height:10.4px;background:rgba(236,236,236,0.92);border-radius:1px"></div><svg class="a" style="left:36.5px;top:399.2px" width="9" height="9" viewBox="0 0 9 9"><path d="M1 8.4L2.2 1.2L6.5 1.2L8.4 8.4Z" fill="#d6d6d6" stroke="#555" stroke-width="0.8"/><path d="M4.5 2.2L8 4.2L6 8Z" fill="#3b8ed8"/></svg><div class="t" style="left:52.4px;top:400.4px;font-size:6.5px;color:#262626;-webkit-text-stroke:0.2px #262626;transform:scaleX(0.857);transform-origin:0 0;">勾配150</div><div class="a" style="left:35.2px;top:411.2px;width:51.9px;height:10.4px;background:rgba(236,236,236,0.92);border-radius:1px"></div><svg class="a" style="left:36.5px;top:411.9px" width="9" height="9" viewBox="0 0 9 9"><path d="M0.6 8.4V1.5L1.5 0.6H4A4.4 4.4 0 0 1 8.4 5V8.4Z" fill="#d6d6d6" stroke="#555" stroke-width="0.8"/><path d="M4 0.6A4.4 4.4 0 0 1 8.4 5" fill="none" stroke="#3b8ed8" stroke-width="1.6"/></svg><div class="t" style="left:52.4px;top:413.1px;font-size:6.5px;color:#262626;-webkit-text-stroke:0.2px #262626;transform:scaleX(0.654);transform-origin:0 0;">フィレット181</div><div class="a" style="left:35.2px;top:424.0px;width:51.9px;height:10.4px;background:rgba(236,236,236,0.92);border-radius:1px"></div><svg class="a" style="left:36.5px;top:424.7px" width="9" height="9" viewBox="0 0 9 9"><path d="M0.6 8.4V1.5L1.5 0.6H4A4.4 4.4 0 0 1 8.4 5V8.4Z" fill="#d6d6d6" stroke="#555" stroke-width="0.8"/><path d="M4 0.6A4.4 4.4 0 0 1 8.4 5" fill="none" stroke="#3b8ed8" stroke-width="1.6"/></svg><div class="t" style="left:52.4px;top:425.9px;font-size:6.5px;color:#262626;-webkit-text-stroke:0.2px #262626;transform:scaleX(0.654);transform-origin:0 0;">フィレット225</div><div class="a" style="left:35.2px;top:436.8px;width:51.9px;height:10.4px;background:rgba(236,236,236,0.92);border-radius:1px"></div><svg class="a" style="left:36.5px;top:437.4px" width="9" height="9" viewBox="0 0 9 9"><path d="M0.5 2L2 0.5H6.5V7.5L5 9H0.5Z" fill="#3d8fdc"/><path d="M0.5 2H5V9" fill="none" stroke="#2b6fb5" stroke-width="0.6"/><rect x="7.6" y="1" width="1" height="7" fill="#333"/></svg><div class="t" style="left:52.4px;top:438.6px;font-size:6.5px;color:#262626;-webkit-text-stroke:0.2px #262626;transform:scaleX(0.772);transform-origin:0 0;">押し出し251</div><div class="a" style="left:35.2px;top:449.5px;width:51.9px;height:10.4px;background:rgba(236,236,236,0.92);border-radius:1px"></div><svg class="a" style="left:36.5px;top:450.2px" width="9" height="9" viewBox="0 0 9 9"><path d="M0.5 2L2 0.5H6.5V7.5L5 9H0.5Z" fill="#3d8fdc"/><path d="M0.5 2H5V9" fill="none" stroke="#2b6fb5" stroke-width="0.6"/><rect x="7.6" y="1" width="1" height="7" fill="#333"/></svg><div class="t" style="left:52.4px;top:451.4px;font-size:6.5px;color:#262626;-webkit-text-stroke:0.2px #262626;transform:scaleX(0.772);transform-origin:0 0;">押し出し318</div><div class="a" style="left:35.2px;top:462.2px;width:43.2px;height:10.4px;background:rgba(236,236,236,0.92);border-radius:1px"></div><svg class="a" style="left:36.5px;top:462.9px" width="9" height="9" viewBox="0 0 9 9"><path d="M1 8.4L2.2 1.2L6.5 1.2L8.4 8.4Z" fill="#d6d6d6" stroke="#555" stroke-width="0.8"/><path d="M4.5 2.2L8 4.2L6 8Z" fill="#3b8ed8"/></svg><div class="t" style="left:52.4px;top:464.1px;font-size:6.5px;color:#262626;-webkit-text-stroke:0.2px #262626;transform:scaleX(0.857);transform-origin:0 0;">勾配319</div><div class="a" style="left:35.2px;top:475.0px;width:51.9px;height:10.4px;background:rgba(236,236,236,0.92);border-radius:1px"></div><svg class="a" style="left:36.5px;top:475.7px" width="9" height="9" viewBox="0 0 9 9"><path d="M0.6 8.4V1.5L1.5 0.6H4A4.4 4.4 0 0 1 8.4 5V8.4Z" fill="#d6d6d6" stroke="#555" stroke-width="0.8"/><path d="M4 0.6A4.4 4.4 0 0 1 8.4 5" fill="none" stroke="#3b8ed8" stroke-width="1.6"/></svg><div class="t" style="left:52.4px;top:476.9px;font-size:6.5px;color:#262626;-webkit-text-stroke:0.2px #262626;transform:scaleX(0.654);transform-origin:0 0;">フィレット320</div><div class="a" style="left:35.2px;top:487.8px;width:51.9px;height:10.4px;background:rgba(236,236,236,0.92);border-radius:1px"></div><svg class="a" style="left:36.5px;top:488.4px" width="9" height="9" viewBox="0 0 9 9"><path d="M0.6 8.4V1.5L1.5 0.6H4A4.4 4.4 0 0 1 8.4 5V8.4Z" fill="#d6d6d6" stroke="#555" stroke-width="0.8"/><path d="M4 0.6A4.4 4.4 0 0 1 8.4 5" fill="none" stroke="#3b8ed8" stroke-width="1.6"/></svg><div class="t" style="left:52.4px;top:489.6px;font-size:6.5px;color:#262626;-webkit-text-stroke:0.2px #262626;transform:scaleX(0.654);transform-origin:0 0;">フィレット321</div><div class="a" style="left:35.2px;top:500.5px;width:51.9px;height:10.4px;background:rgba(236,236,236,0.92);border-radius:1px"></div><svg class="a" style="left:36.5px;top:501.2px" width="9" height="9" viewBox="0 0 9 9"><path d="M0.6 8.4V1.5L1.5 0.6H4A4.4 4.4 0 0 1 8.4 5V8.4Z" fill="#d6d6d6" stroke="#555" stroke-width="0.8"/><path d="M4 0.6A4.4 4.4 0 0 1 8.4 5" fill="none" stroke="#3b8ed8" stroke-width="1.6"/></svg><div class="t" style="left:52.4px;top:502.4px;font-size:6.5px;color:#262626;-webkit-text-stroke:0.2px #262626;transform:scaleX(0.654);transform-origin:0 0;">フィレット322</div><div class="a" style="left:35.2px;top:513.2px;width:51.9px;height:10.4px;background:rgba(236,236,236,0.92);border-radius:1px"></div><svg class="a" style="left:36.5px;top:514.0px" width="9" height="9" viewBox="0 0 9 9"><path d="M0.5 2L2 0.5H6.5V7.5L5 9H0.5Z" fill="#3d8fdc"/><path d="M0.5 2H5V9" fill="none" stroke="#2b6fb5" stroke-width="0.6"/><rect x="7.6" y="1" width="1" height="7" fill="#333"/></svg><div class="t" style="left:52.4px;top:515.2px;font-size:6.5px;color:#262626;-webkit-text-stroke:0.2px #262626;transform:scaleX(0.772);transform-origin:0 0;">押し出し323</div><div class="a" style="left:35.2px;top:526.0px;width:51.9px;height:10.4px;background:rgba(236,236,236,0.92);border-radius:1px"></div><svg class="a" style="left:36.5px;top:526.7px" width="9" height="9" viewBox="0 0 9 9"><path d="M0.5 2L2 0.5H6.5V7.5L5 9H0.5Z" fill="#3d8fdc"/><path d="M0.5 2H5V9" fill="none" stroke="#2b6fb5" stroke-width="0.6"/><rect x="7.6" y="1" width="1" height="7" fill="#333"/></svg><div class="t" style="left:52.4px;top:527.9px;font-size:6.5px;color:#262626;-webkit-text-stroke:0.2px #262626;transform:scaleX(0.772);transform-origin:0 0;">押し出し324</div><div class="a" style="left:35.2px;top:538.8px;width:51.9px;height:10.4px;background:rgba(236,236,236,0.92);border-radius:1px"></div><svg class="a" style="left:36.5px;top:539.5px" width="9" height="9" viewBox="0 0 9 9"><path d="M0.5 2L2 0.5H6.5V7.5L5 9H0.5Z" fill="#3d8fdc"/><path d="M0.5 2H5V9" fill="none" stroke="#2b6fb5" stroke-width="0.6"/><rect x="7.6" y="1" width="1" height="7" fill="#333"/></svg><div class="t" style="left:52.4px;top:540.7px;font-size:6.5px;color:#262626;-webkit-text-stroke:0.2px #262626;transform:scaleX(0.772);transform-origin:0 0;">押し出し325</div><div class="a" style="left:35.2px;top:551.5px;width:51.9px;height:10.4px;background:rgba(236,236,236,0.92);border-radius:1px"></div><svg class="a" style="left:36.5px;top:552.2px" width="9" height="9" viewBox="0 0 9 9"><path d="M0.5 2L2 0.5H6.5V7.5L5 9H0.5Z" fill="#3d8fdc"/><path d="M0.5 2H5V9" fill="none" stroke="#2b6fb5" stroke-width="0.6"/><rect x="7.6" y="1" width="1" height="7" fill="#333"/></svg><div class="t" style="left:52.4px;top:553.4px;font-size:6.5px;color:#262626;-webkit-text-stroke:0.2px #262626;transform:scaleX(0.772);transform-origin:0 0;">押し出し326</div><div class="a" style="left:35.2px;top:564.2px;width:51.9px;height:10.4px;background:rgba(236,236,236,0.92);border-radius:1px"></div><svg class="a" style="left:36.5px;top:565.0px" width="9" height="9" viewBox="0 0 9 9"><path d="M0.5 2L2 0.5H6.5V7.5L5 9H0.5Z" fill="#3d8fdc"/><path d="M0.5 2H5V9" fill="none" stroke="#2b6fb5" stroke-width="0.6"/><rect x="7.6" y="1" width="1" height="7" fill="#333"/></svg><div class="t" style="left:52.4px;top:566.2px;font-size:6.5px;color:#262626;-webkit-text-stroke:0.2px #262626;transform:scaleX(0.772);transform-origin:0 0;">押し出し327</div><div class="a" style="left:35.2px;top:577.0px;width:47.8px;height:10.4px;background:rgba(236,236,236,0.92);border-radius:1px"></div><svg class="a" style="left:36.5px;top:577.7px" width="9" height="9" viewBox="0 0 9 9"><path d="M0.6 8.4V2L2 0.6H5L8.4 4V8.4Z" fill="#d6d6d6" stroke="#555" stroke-width="0.8"/><path d="M4.6 0.8L8.3 4.4L6.8 5.3L3.4 1.8Z" fill="#3b8ed8"/></svg><div class="t" style="left:52.4px;top:578.9px;font-size:6.5px;color:#262626;-webkit-text-stroke:0.2px #262626;transform:scaleX(0.816);transform-origin:0 0;">面取り328</div><div class="a" style="left:6.5px;top:600px;width:159px;height:13.5px;background:#efefef;border:1px solid #e2e2e2;border-radius:1px"></div><div class="t" style="left:20.0px;top:603.5px;font-size:6.5px;color:#777;transform:scaleX(0.571);transform-origin:0 0;">コメント</div><div class="a" style="left:154px;top:603.5px;width:6.5px;height:6.5px;border-radius:50%;background:#222"></div><div class="a" style="left:156.2px;top:605.7px;width:2.1px;height:2.1px;border-radius:50%;background:#eee"></div><div class="a" style="left:0;top:45px;width:3px;height:186px;background:#4d4d4d;border-radius:0 2px 2px 0"></div><div class="a" style="left:0;top:552px;width:4px;height:68px;background:#000"></div><div class="a" style="left:0;top:615px;width:1024px;height:5px;background:#111"></div><div class="a" style="left:30px;top:615px;width:152px;height:5px;background:#ececec"></div><div class="a" style="left:340px;top:615px;width:25px;height:5px;background:#b5601e"></div><div class="a" style="left:365px;top:615px;width:26px;height:5px;background:#3a3a3a"></div></body></html>
